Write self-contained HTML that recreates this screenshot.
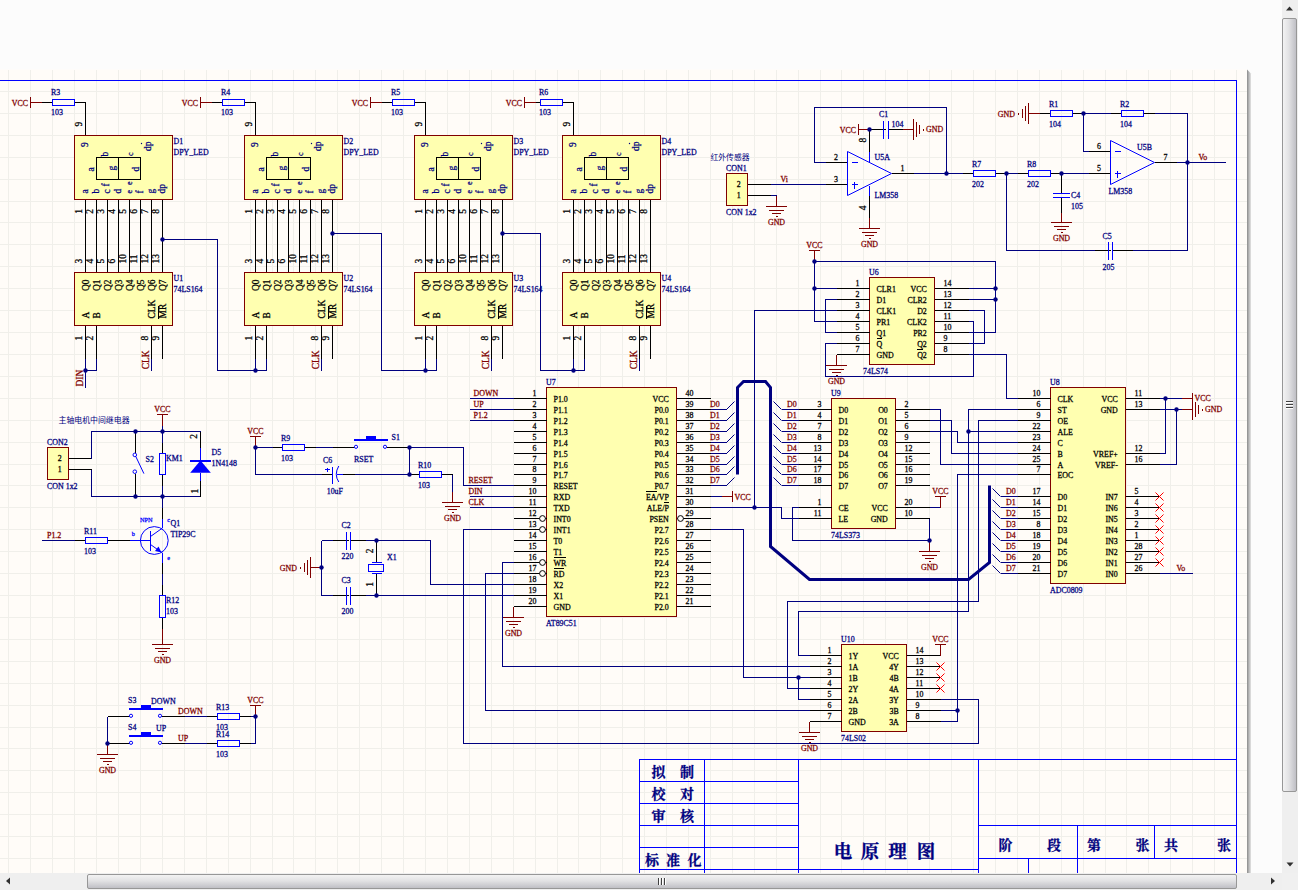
<!DOCTYPE html><html><head><meta charset="utf-8"><title>电原理图</title><style>html,body{margin:0;padding:0;background:#fcfcfc;overflow:hidden}svg{display:block}text{white-space:pre;stroke-width:0.28px}</style></head><body>
<svg width="1298" height="890" viewBox="0 0 1298 890" font-family='"Liberation Serif", serif' font-size="8.8">
<defs><linearGradient id="vth" x1="0" y1="0" x2="1" y2="0"><stop offset="0" stop-color="#f4f4f4"/><stop offset="0.45" stop-color="#e2e2e4"/><stop offset="1" stop-color="#bdbdc3"/></linearGradient><linearGradient id="hth" x1="0" y1="0" x2="0" y2="1"><stop offset="0" stop-color="#f4f4f4"/><stop offset="0.45" stop-color="#e2e2e4"/><stop offset="1" stop-color="#bdbdc3"/></linearGradient><linearGradient id="sh" x1="0" y1="0" x2="1" y2="0"><stop offset="0" stop-color="#8c8c8c"/><stop offset="1" stop-color="#e4e4e4"/></linearGradient></defs>
<rect width="1298" height="890" fill="#fcfcfc"/>
<rect x="0" y="69.5" width="1247" height="803.5" fill="#fffcf8"/>
<path d="M1247 69.5l4 4V873h-4z" fill="url(#sh)"/>
<path d="M8.5 70V873M30.5 70V873M52.5 70V873M74.5 70V873M96.5 70V873M118.5 70V873M140.5 70V873M162.5 70V873M184.5 70V873M206.5 70V873M228.5 70V873M250.5 70V873M272.5 70V873M293.5 70V873M315.5 70V873M337.5 70V873M359.5 70V873M381.5 70V873M403.5 70V873M425.5 70V873M447.5 70V873M469.5 70V873M491.5 70V873M513.5 70V873M535.5 70V873M557.5 70V873M578.5 70V873M600.5 70V873M622.5 70V873M644.5 70V873M666.5 70V873M688.5 70V873M710.5 70V873M732.5 70V873M754.5 70V873M776.5 70V873M798.5 70V873M820.5 70V873M841.5 70V873M863.5 70V873M885.5 70V873M907.5 70V873M929.5 70V873M951.5 70V873M973.5 70V873M995.5 70V873M1017.5 70V873M1039.5 70V873M1061.5 70V873M1083.5 70V873M1105.5 70V873M1126.5 70V873M1148.5 70V873M1170.5 70V873M1192.5 70V873M1214.5 70V873M1236.5 70V873M0 91.5H1247M0 113.5H1247M0 135.5H1247M0 157.5H1247M0 179.5H1247M0 201.5H1247M0 222.5H1247M0 244.5H1247M0 266.5H1247M0 288.5H1247M0 310.5H1247M0 332.5H1247M0 354.5H1247M0 376.5H1247M0 398.5H1247M0 420.5H1247M0 442.5H1247M0 464.5H1247M0 485.5H1247M0 507.5H1247M0 529.5H1247M0 551.5H1247M0 573.5H1247M0 595.5H1247M0 617.5H1247M0 639.5H1247M0 661.5H1247M0 683.5H1247M0 705.5H1247M0 727.5H1247M0 748.5H1247M0 770.5H1247M0 792.5H1247M0 814.5H1247M0 836.5H1247M0 858.5H1247" stroke="#f0efea" stroke-width="1" fill="none" shape-rendering="crispEdges"/>
<g shape-rendering="crispEdges">
<polyline points="30.5,96.5 30.5,107.5" stroke="#800000" stroke-width="1" fill="none"/>
<polyline points="30.5,102.5 41.5,102.5" stroke="#800000" stroke-width="1" fill="none"/>
<polyline points="41.5,102.5 52.5,102.5" stroke="#000000" stroke-width="1" fill="none"/>
<rect x="52.5" y="99.5" width="22" height="6" fill="none" stroke="#0000ff" stroke-width="1"/>
<polyline points="74.5,102.5 85.5,102.5 85.5,135.5" stroke="#000000" stroke-width="1" fill="none"/>
<rect x="74.5" y="135.5" width="98" height="64" fill="#ffffb0" stroke="#800000" stroke-width="1"/>
<rect x="96.5" y="157.5" width="44" height="22" fill="none" stroke="#000000" stroke-width="1"/>
<polyline points="118.5,157.5 118.5,179.5" stroke="#000000" stroke-width="1" fill="none"/>
<polyline points="85.5,199.5 85.5,272.5" stroke="#000000" stroke-width="1" fill="none"/>
<polyline points="96.5,199.5 96.5,272.5" stroke="#000000" stroke-width="1" fill="none"/>
<polyline points="107.5,199.5 107.5,272.5" stroke="#000000" stroke-width="1" fill="none"/>
<polyline points="118.5,199.5 118.5,272.5" stroke="#000000" stroke-width="1" fill="none"/>
<polyline points="129.5,199.5 129.5,272.5" stroke="#000000" stroke-width="1" fill="none"/>
<polyline points="140.5,199.5 140.5,272.5" stroke="#000000" stroke-width="1" fill="none"/>
<polyline points="151.5,199.5 151.5,272.5" stroke="#000000" stroke-width="1" fill="none"/>
<polyline points="162.5,199.5 162.5,272.5" stroke="#000000" stroke-width="1" fill="none"/>
<rect x="74.5" y="272.5" width="98" height="53" fill="#ffffb0" stroke="#800000" stroke-width="1"/>
<polyline points="85.5,325.5 85.5,358.5" stroke="#000000" stroke-width="1" fill="none"/>
<polyline points="96.5,325.5 96.5,358.5" stroke="#000000" stroke-width="1" fill="none"/>
<polyline points="151.5,325.5 151.5,358.5" stroke="#000000" stroke-width="1" fill="none"/>
<polyline points="162.5,325.5 162.5,358.5" stroke="#000000" stroke-width="1" fill="none"/>
<polyline points="158,318.5 158,306.24" stroke="#000000" stroke-width="1" fill="none"/>
<polyline points="85.5,358.5 85.5,370.5" stroke="#000080" stroke-width="1" fill="none"/>
<polyline points="96.5,358.5 96.5,370.5" stroke="#000080" stroke-width="1" fill="none"/>
<polyline points="151.5,358.5 151.5,370.5" stroke="#000080" stroke-width="1" fill="none"/>
<polyline points="85.5,370.5 96.5,370.5" stroke="#000080" stroke-width="1" fill="none"/>
<polyline points="85.5,370.5 85.5,387.5" stroke="#000080" stroke-width="1" fill="none"/>
<polyline points="162.5,239.5 217.5,239.5 217.5,370.5" stroke="#000080" stroke-width="1" fill="none"/>
<polyline points="200.5,96.5 200.5,107.5" stroke="#800000" stroke-width="1" fill="none"/>
<polyline points="200.5,102.5 211.5,102.5" stroke="#800000" stroke-width="1" fill="none"/>
<polyline points="211.5,102.5 222.5,102.5" stroke="#000000" stroke-width="1" fill="none"/>
<rect x="222.5" y="99.5" width="22" height="6" fill="none" stroke="#0000ff" stroke-width="1"/>
<polyline points="244.5,102.5 255.5,102.5 255.5,135.5" stroke="#000000" stroke-width="1" fill="none"/>
<rect x="244.5" y="135.5" width="98" height="64" fill="#ffffb0" stroke="#800000" stroke-width="1"/>
<rect x="266.5" y="157.5" width="44" height="22" fill="none" stroke="#000000" stroke-width="1"/>
<polyline points="288.5,157.5 288.5,179.5" stroke="#000000" stroke-width="1" fill="none"/>
<polyline points="255.5,199.5 255.5,272.5" stroke="#000000" stroke-width="1" fill="none"/>
<polyline points="266.5,199.5 266.5,272.5" stroke="#000000" stroke-width="1" fill="none"/>
<polyline points="277.5,199.5 277.5,272.5" stroke="#000000" stroke-width="1" fill="none"/>
<polyline points="288.5,199.5 288.5,272.5" stroke="#000000" stroke-width="1" fill="none"/>
<polyline points="299.5,199.5 299.5,272.5" stroke="#000000" stroke-width="1" fill="none"/>
<polyline points="310.5,199.5 310.5,272.5" stroke="#000000" stroke-width="1" fill="none"/>
<polyline points="321.5,199.5 321.5,272.5" stroke="#000000" stroke-width="1" fill="none"/>
<polyline points="332.5,199.5 332.5,272.5" stroke="#000000" stroke-width="1" fill="none"/>
<rect x="244.5" y="272.5" width="98" height="53" fill="#ffffb0" stroke="#800000" stroke-width="1"/>
<polyline points="255.5,325.5 255.5,358.5" stroke="#000000" stroke-width="1" fill="none"/>
<polyline points="266.5,325.5 266.5,358.5" stroke="#000000" stroke-width="1" fill="none"/>
<polyline points="321.5,325.5 321.5,358.5" stroke="#000000" stroke-width="1" fill="none"/>
<polyline points="332.5,325.5 332.5,358.5" stroke="#000000" stroke-width="1" fill="none"/>
<polyline points="328,318.5 328,306.24" stroke="#000000" stroke-width="1" fill="none"/>
<polyline points="255.5,358.5 255.5,370.5" stroke="#000080" stroke-width="1" fill="none"/>
<polyline points="266.5,358.5 266.5,370.5" stroke="#000080" stroke-width="1" fill="none"/>
<polyline points="321.5,358.5 321.5,370.5" stroke="#000080" stroke-width="1" fill="none"/>
<polyline points="332.5,233.5 381.5,233.5 381.5,370.5" stroke="#000080" stroke-width="1" fill="none"/>
<polyline points="370.5,96.5 370.5,107.5" stroke="#800000" stroke-width="1" fill="none"/>
<polyline points="370.5,102.5 381.5,102.5" stroke="#800000" stroke-width="1" fill="none"/>
<polyline points="381.5,102.5 392.5,102.5" stroke="#000000" stroke-width="1" fill="none"/>
<rect x="392.5" y="99.5" width="22" height="6" fill="none" stroke="#0000ff" stroke-width="1"/>
<polyline points="414.5,102.5 425.5,102.5 425.5,135.5" stroke="#000000" stroke-width="1" fill="none"/>
<rect x="414.5" y="135.5" width="98" height="64" fill="#ffffb0" stroke="#800000" stroke-width="1"/>
<rect x="436.5" y="157.5" width="44" height="22" fill="none" stroke="#000000" stroke-width="1"/>
<polyline points="458.5,157.5 458.5,179.5" stroke="#000000" stroke-width="1" fill="none"/>
<polyline points="425.5,199.5 425.5,272.5" stroke="#000000" stroke-width="1" fill="none"/>
<polyline points="436.5,199.5 436.5,272.5" stroke="#000000" stroke-width="1" fill="none"/>
<polyline points="447.5,199.5 447.5,272.5" stroke="#000000" stroke-width="1" fill="none"/>
<polyline points="458.5,199.5 458.5,272.5" stroke="#000000" stroke-width="1" fill="none"/>
<polyline points="469.5,199.5 469.5,272.5" stroke="#000000" stroke-width="1" fill="none"/>
<polyline points="480.5,199.5 480.5,272.5" stroke="#000000" stroke-width="1" fill="none"/>
<polyline points="491.5,199.5 491.5,272.5" stroke="#000000" stroke-width="1" fill="none"/>
<polyline points="502.5,199.5 502.5,272.5" stroke="#000000" stroke-width="1" fill="none"/>
<rect x="414.5" y="272.5" width="98" height="53" fill="#ffffb0" stroke="#800000" stroke-width="1"/>
<polyline points="425.5,325.5 425.5,358.5" stroke="#000000" stroke-width="1" fill="none"/>
<polyline points="436.5,325.5 436.5,358.5" stroke="#000000" stroke-width="1" fill="none"/>
<polyline points="491.5,325.5 491.5,358.5" stroke="#000000" stroke-width="1" fill="none"/>
<polyline points="502.5,325.5 502.5,358.5" stroke="#000000" stroke-width="1" fill="none"/>
<polyline points="498,318.5 498,306.24" stroke="#000000" stroke-width="1" fill="none"/>
<polyline points="425.5,358.5 425.5,370.5" stroke="#000080" stroke-width="1" fill="none"/>
<polyline points="436.5,358.5 436.5,370.5" stroke="#000080" stroke-width="1" fill="none"/>
<polyline points="491.5,358.5 491.5,370.5" stroke="#000080" stroke-width="1" fill="none"/>
<polyline points="502.5,233.5 540.5,233.5 540.5,370.5" stroke="#000080" stroke-width="1" fill="none"/>
<polyline points="524.5,96.5 524.5,107.5" stroke="#800000" stroke-width="1" fill="none"/>
<polyline points="524.5,102.5 535.5,102.5" stroke="#800000" stroke-width="1" fill="none"/>
<polyline points="535.5,102.5 540.5,102.5" stroke="#000000" stroke-width="1" fill="none"/>
<rect x="540.5" y="99.5" width="22" height="6" fill="none" stroke="#0000ff" stroke-width="1"/>
<polyline points="562.5,102.5 573.5,102.5 573.5,135.5" stroke="#000000" stroke-width="1" fill="none"/>
<rect x="562.5" y="135.5" width="98" height="64" fill="#ffffb0" stroke="#800000" stroke-width="1"/>
<rect x="584.5" y="157.5" width="44" height="22" fill="none" stroke="#000000" stroke-width="1"/>
<polyline points="606.5,157.5 606.5,179.5" stroke="#000000" stroke-width="1" fill="none"/>
<polyline points="573.5,199.5 573.5,272.5" stroke="#000000" stroke-width="1" fill="none"/>
<polyline points="584.5,199.5 584.5,272.5" stroke="#000000" stroke-width="1" fill="none"/>
<polyline points="595.5,199.5 595.5,272.5" stroke="#000000" stroke-width="1" fill="none"/>
<polyline points="606.5,199.5 606.5,272.5" stroke="#000000" stroke-width="1" fill="none"/>
<polyline points="617.5,199.5 617.5,272.5" stroke="#000000" stroke-width="1" fill="none"/>
<polyline points="628.5,199.5 628.5,272.5" stroke="#000000" stroke-width="1" fill="none"/>
<polyline points="639.5,199.5 639.5,272.5" stroke="#000000" stroke-width="1" fill="none"/>
<polyline points="650.5,199.5 650.5,272.5" stroke="#000000" stroke-width="1" fill="none"/>
<rect x="562.5" y="272.5" width="98" height="53" fill="#ffffb0" stroke="#800000" stroke-width="1"/>
<polyline points="573.5,325.5 573.5,358.5" stroke="#000000" stroke-width="1" fill="none"/>
<polyline points="584.5,325.5 584.5,358.5" stroke="#000000" stroke-width="1" fill="none"/>
<polyline points="639.5,325.5 639.5,358.5" stroke="#000000" stroke-width="1" fill="none"/>
<polyline points="650.5,325.5 650.5,358.5" stroke="#000000" stroke-width="1" fill="none"/>
<polyline points="646,318.5 646,306.24" stroke="#000000" stroke-width="1" fill="none"/>
<polyline points="573.5,358.5 573.5,370.5" stroke="#000080" stroke-width="1" fill="none"/>
<polyline points="584.5,358.5 584.5,370.5" stroke="#000080" stroke-width="1" fill="none"/>
<polyline points="639.5,358.5 639.5,370.5" stroke="#000080" stroke-width="1" fill="none"/>
<polyline points="217.5,370.5 266.5,370.5" stroke="#000080" stroke-width="1" fill="none"/>
<polyline points="381.5,370.5 436.5,370.5" stroke="#000080" stroke-width="1" fill="none"/>
<polyline points="540.5,370.5 584.5,370.5" stroke="#000080" stroke-width="1" fill="none"/>
<rect x="726.5" y="173.5" width="21" height="32" fill="#ffffb0" stroke="#800000" stroke-width="1"/>
<polyline points="747.5,184.5 770.5,184.5" stroke="#000000" stroke-width="1" fill="none"/>
<polyline points="747.5,195.5 770.5,195.5" stroke="#000000" stroke-width="1" fill="none"/>
<polyline points="770.5,184.5 825.5,184.5" stroke="#000080" stroke-width="1" fill="none"/>
<polyline points="770.5,195.5 776.5,195.5 776.5,195.5" stroke="#000080" stroke-width="1" fill="none"/>
<polyline points="776.5,195.5 776.5,206.5" stroke="#800000" stroke-width="1" fill="none"/>
<polyline points="776.5,195.5 776.5,206.5" stroke="#800000" stroke-width="1" fill="none"/>
<polyline points="766,206.5 787,206.5" stroke="#800000" stroke-width="1" fill="none"/>
<polyline points="769,210.5 784,210.5" stroke="#800000" stroke-width="1" fill="none"/>
<polyline points="772,213.5 781,213.5" stroke="#800000" stroke-width="1" fill="none"/>
<polyline points="775.5,216.5 777.5,216.5" stroke="#800000" stroke-width="1" fill="none"/>
<polyline points="825.5,162.5 847.5,162.5" stroke="#000000" stroke-width="1" fill="none"/>
<polyline points="825.5,184.5 847.5,184.5" stroke="#000000" stroke-width="1" fill="none"/>
<polyline points="891.5,173.5 913.5,173.5" stroke="#000000" stroke-width="1" fill="none"/>
<polyline points="851.5,162.5 857.5,162.5" stroke="#0000ff" stroke-width="1" fill="none"/>
<polyline points="851.5,184.5 857.5,184.5" stroke="#0000ff" stroke-width="1" fill="none"/>
<polyline points="854.5,181.5 854.5,188.5" stroke="#0000ff" stroke-width="1" fill="none"/>
<polyline points="869.5,129.5 869.5,151.5" stroke="#000000" stroke-width="1" fill="none"/>
<polyline points="869.5,151.5 869.5,161.5" stroke="#0000ff" stroke-width="1" fill="none"/>
<polyline points="869.5,185.5 869.5,195.5" stroke="#0000ff" stroke-width="1" fill="none"/>
<polyline points="869.5,195.5 869.5,217.5" stroke="#000000" stroke-width="1" fill="none"/>
<polyline points="869.5,217.5 869.5,228.5" stroke="#800000" stroke-width="1" fill="none"/>
<polyline points="859,228.5 880,228.5" stroke="#800000" stroke-width="1" fill="none"/>
<polyline points="862,232.5 877,232.5" stroke="#800000" stroke-width="1" fill="none"/>
<polyline points="865,235.5 874,235.5" stroke="#800000" stroke-width="1" fill="none"/>
<polyline points="868.5,238.5 870.5,238.5" stroke="#800000" stroke-width="1" fill="none"/>
<polyline points="825.5,162.5 814.5,162.5 814.5,107.5 946.5,107.5 946.5,173.5" stroke="#000080" stroke-width="1" fill="none"/>
<polyline points="913.5,173.5 962.5,173.5" stroke="#000080" stroke-width="1" fill="none"/>
<polyline points="858.5,123.5 858.5,134.5" stroke="#800000" stroke-width="1" fill="none"/>
<polyline points="858.5,129.5 869.5,129.5" stroke="#800000" stroke-width="1" fill="none"/>
<polyline points="869.5,129.5 885.5,129.5" stroke="#000000" stroke-width="1" fill="none"/>
<polyline points="883.5,120.5 883.5,138.5" stroke="#0000ff" stroke-width="1" fill="none"/>
<polyline points="888.5,120.5 888.5,138.5" stroke="#0000ff" stroke-width="1" fill="none"/>
<polyline points="888.5,129.5 902.5,129.5" stroke="#000000" stroke-width="1" fill="none"/>
<polyline points="902.5,129.5 913.5,129.5" stroke="#800000" stroke-width="1" fill="none"/>
<polyline points="913.5,119 913.5,140" stroke="#800000" stroke-width="1" fill="none"/>
<polyline points="916.5,122 916.5,137" stroke="#800000" stroke-width="1" fill="none"/>
<polyline points="919.5,125 919.5,134" stroke="#800000" stroke-width="1" fill="none"/>
<polyline points="923.5,128.5 923.5,130.5" stroke="#800000" stroke-width="1" fill="none"/>
<polyline points="962.5,173.5 973.5,173.5" stroke="#000000" stroke-width="1" fill="none"/>
<polyline points="995.5,173.5 1006.5,173.5" stroke="#000000" stroke-width="1" fill="none"/>
<rect x="973.5" y="170.5" width="22" height="6" fill="none" stroke="#0000ff" stroke-width="1"/>
<polyline points="1017.5,173.5 1028.5,173.5" stroke="#000000" stroke-width="1" fill="none"/>
<polyline points="1050.5,173.5 1061.5,173.5" stroke="#000000" stroke-width="1" fill="none"/>
<rect x="1028.5" y="170.5" width="22" height="6" fill="none" stroke="#0000ff" stroke-width="1"/>
<polyline points="1006.5,173.5 1017.5,173.5" stroke="#000080" stroke-width="1" fill="none"/>
<polyline points="1061.5,173.5 1088.5,173.5" stroke="#000080" stroke-width="1" fill="none"/>
<polyline points="1088.5,151.5 1110.5,151.5" stroke="#000000" stroke-width="1" fill="none"/>
<polyline points="1088.5,173.5 1110.5,173.5" stroke="#000000" stroke-width="1" fill="none"/>
<polyline points="1154.5,162.5 1176.5,162.5" stroke="#000000" stroke-width="1" fill="none"/>
<polyline points="1114.5,151.5 1120.5,151.5" stroke="#0000ff" stroke-width="1" fill="none"/>
<polyline points="1114.5,173.5 1120.5,173.5" stroke="#0000ff" stroke-width="1" fill="none"/>
<polyline points="1117.5,170.5 1117.5,177.5" stroke="#0000ff" stroke-width="1" fill="none"/>
<polyline points="1039.5,113.5 1028.5,113.5" stroke="#800000" stroke-width="1" fill="none"/>
<polyline points="1028.5,103 1028.5,124" stroke="#800000" stroke-width="1" fill="none"/>
<polyline points="1025.5,106 1025.5,121" stroke="#800000" stroke-width="1" fill="none"/>
<polyline points="1022.5,109 1022.5,118" stroke="#800000" stroke-width="1" fill="none"/>
<polyline points="1018.5,112.5 1018.5,114.5" stroke="#800000" stroke-width="1" fill="none"/>
<polyline points="1039.5,113.5 1050.5,113.5" stroke="#000000" stroke-width="1" fill="none"/>
<polyline points="1072.5,113.5 1083.5,113.5" stroke="#000000" stroke-width="1" fill="none"/>
<rect x="1050.5" y="110.5" width="22" height="6" fill="none" stroke="#0000ff" stroke-width="1"/>
<polyline points="1110.5,113.5 1121.5,113.5" stroke="#000000" stroke-width="1" fill="none"/>
<polyline points="1143.5,113.5 1154.5,113.5" stroke="#000000" stroke-width="1" fill="none"/>
<rect x="1121.5" y="110.5" width="22" height="6" fill="none" stroke="#0000ff" stroke-width="1"/>
<polyline points="1083.5,113.5 1110.5,113.5" stroke="#000080" stroke-width="1" fill="none"/>
<polyline points="1154.5,113.5 1187.5,113.5 1187.5,250.5 1132.5,250.5" stroke="#000080" stroke-width="1" fill="none"/>
<polyline points="1083.5,113.5 1083.5,151.5 1088.5,151.5" stroke="#000080" stroke-width="1" fill="none"/>
<polyline points="1176.5,162.5 1225.5,162.5" stroke="#000080" stroke-width="1" fill="none"/>
<polyline points="1061.5,173.5 1061.5,193.5" stroke="#000000" stroke-width="1" fill="none"/>
<polyline points="1053,193.5 1070,193.5" stroke="#0000ff" stroke-width="1" fill="none"/>
<polyline points="1053,197.5 1070,197.5" stroke="#0000ff" stroke-width="1" fill="none"/>
<polyline points="1061.5,197.5 1061.5,212.5" stroke="#000000" stroke-width="1" fill="none"/>
<polyline points="1061.5,212.5 1061.5,222.5" stroke="#800000" stroke-width="1" fill="none"/>
<polyline points="1051,222.5 1072,222.5" stroke="#800000" stroke-width="1" fill="none"/>
<polyline points="1054,226.5 1069,226.5" stroke="#800000" stroke-width="1" fill="none"/>
<polyline points="1057,229.5 1066,229.5" stroke="#800000" stroke-width="1" fill="none"/>
<polyline points="1060.5,232.5 1062.5,232.5" stroke="#800000" stroke-width="1" fill="none"/>
<polyline points="1006.5,173.5 1006.5,250.5 1094.5,250.5" stroke="#000080" stroke-width="1" fill="none"/>
<polyline points="1094.5,250.5 1110.5,250.5" stroke="#000000" stroke-width="1" fill="none"/>
<polyline points="1108.5,241.5 1108.5,259.5" stroke="#0000ff" stroke-width="1" fill="none"/>
<polyline points="1112.5,241.5 1112.5,259.5" stroke="#0000ff" stroke-width="1" fill="none"/>
<polyline points="1112.5,250.5 1132.5,250.5" stroke="#000000" stroke-width="1" fill="none"/>
<rect x="869.5" y="277.5" width="65" height="87" fill="#ffffb0" stroke="#800000" stroke-width="1"/>
<polyline points="836.5,288.5 869.5,288.5" stroke="#000000" stroke-width="1" fill="none"/>
<polyline points="836.5,299.5 869.5,299.5" stroke="#000000" stroke-width="1" fill="none"/>
<polyline points="836.5,310.5 869.5,310.5" stroke="#000000" stroke-width="1" fill="none"/>
<polyline points="836.5,321.5 869.5,321.5" stroke="#000000" stroke-width="1" fill="none"/>
<polyline points="836.5,332.5 869.5,332.5" stroke="#000000" stroke-width="1" fill="none"/>
<polyline points="836.5,343.5 869.5,343.5" stroke="#000000" stroke-width="1" fill="none"/>
<polyline points="876.5,338.5 882.19,338.5" stroke="#000000" stroke-width="1" fill="none"/>
<polyline points="836.5,354.5 869.5,354.5" stroke="#000000" stroke-width="1" fill="none"/>
<polyline points="934.5,288.5 968.5,288.5" stroke="#000000" stroke-width="1" fill="none"/>
<polyline points="934.5,299.5 968.5,299.5" stroke="#000000" stroke-width="1" fill="none"/>
<polyline points="934.5,310.5 968.5,310.5" stroke="#000000" stroke-width="1" fill="none"/>
<polyline points="934.5,321.5 968.5,321.5" stroke="#000000" stroke-width="1" fill="none"/>
<polyline points="934.5,332.5 968.5,332.5" stroke="#000000" stroke-width="1" fill="none"/>
<polyline points="934.5,343.5 968.5,343.5" stroke="#000000" stroke-width="1" fill="none"/>
<polyline points="934.5,354.5 968.5,354.5" stroke="#000000" stroke-width="1" fill="none"/>
<polyline points="917.18,349.5 922.86,349.5" stroke="#000000" stroke-width="1" fill="none"/>
<polyline points="814.5,261.5 814.5,250.5" stroke="#800000" stroke-width="1" fill="none"/>
<polyline points="809,250.5 820,250.5" stroke="#800000" stroke-width="1" fill="none"/>
<polyline points="814.5,261.5 995.5,261.5 995.5,332.5 968.5,332.5" stroke="#000080" stroke-width="1" fill="none"/>
<polyline points="968.5,288.5 995.5,288.5" stroke="#000080" stroke-width="1" fill="none"/>
<polyline points="968.5,299.5 995.5,299.5" stroke="#000080" stroke-width="1" fill="none"/>
<polyline points="968.5,310.5 984.5,310.5 984.5,343.5 968.5,343.5" stroke="#000080" stroke-width="1" fill="none"/>
<polyline points="968.5,321.5 973.5,321.5 973.5,376.5 825.5,376.5 825.5,343.5 836.5,343.5" stroke="#000080" stroke-width="1" fill="none"/>
<polyline points="968.5,354.5 1006.5,354.5 1006.5,398.5 1017.5,398.5" stroke="#000080" stroke-width="1" fill="none"/>
<polyline points="814.5,261.5 814.5,321.5 836.5,321.5" stroke="#000080" stroke-width="1" fill="none"/>
<polyline points="814.5,288.5 836.5,288.5" stroke="#000080" stroke-width="1" fill="none"/>
<polyline points="836.5,299.5 825.5,299.5 825.5,332.5 836.5,332.5" stroke="#000080" stroke-width="1" fill="none"/>
<polyline points="836.5,310.5 754.5,310.5 754.5,507.5" stroke="#000080" stroke-width="1" fill="none"/>
<polyline points="836.5,354.5 836.5,365.5" stroke="#800000" stroke-width="1" fill="none"/>
<polyline points="826,365.5 847,365.5" stroke="#800000" stroke-width="1" fill="none"/>
<polyline points="829,369.5 844,369.5" stroke="#800000" stroke-width="1" fill="none"/>
<polyline points="832,372.5 841,372.5" stroke="#800000" stroke-width="1" fill="none"/>
<polyline points="835.5,375.5 837.5,375.5" stroke="#800000" stroke-width="1" fill="none"/>
<rect x="546.5" y="387.5" width="130" height="229" fill="#ffffb0" stroke="#800000" stroke-width="1"/>
<polyline points="513.5,398.5 546.5,398.5" stroke="#000000" stroke-width="1" fill="none"/>
<polyline points="513.5,409.5 546.5,409.5" stroke="#000000" stroke-width="1" fill="none"/>
<polyline points="513.5,420.5 546.5,420.5" stroke="#000000" stroke-width="1" fill="none"/>
<polyline points="513.5,431.5 546.5,431.5" stroke="#000000" stroke-width="1" fill="none"/>
<polyline points="513.5,442.5 546.5,442.5" stroke="#000000" stroke-width="1" fill="none"/>
<polyline points="513.5,453.5 546.5,453.5" stroke="#000000" stroke-width="1" fill="none"/>
<polyline points="513.5,464.5 546.5,464.5" stroke="#000000" stroke-width="1" fill="none"/>
<polyline points="513.5,474.5 546.5,474.5" stroke="#000000" stroke-width="1" fill="none"/>
<polyline points="513.5,485.5 546.5,485.5" stroke="#000000" stroke-width="1" fill="none"/>
<polyline points="513.5,496.5 546.5,496.5" stroke="#000000" stroke-width="1" fill="none"/>
<polyline points="513.5,507.5 546.5,507.5" stroke="#000000" stroke-width="1" fill="none"/>
<polyline points="513.5,518.5 546.5,518.5" stroke="#000000" stroke-width="1" fill="none"/>
<polyline points="513.5,529.5 546.5,529.5" stroke="#000000" stroke-width="1" fill="none"/>
<polyline points="513.5,540.5 546.5,540.5" stroke="#000000" stroke-width="1" fill="none"/>
<polyline points="513.5,551.5 546.5,551.5" stroke="#000000" stroke-width="1" fill="none"/>
<polyline points="513.5,562.5 546.5,562.5" stroke="#000000" stroke-width="1" fill="none"/>
<polyline points="553.5,557.5 566.19,557.5" stroke="#000000" stroke-width="1" fill="none"/>
<polyline points="513.5,573.5 546.5,573.5" stroke="#000000" stroke-width="1" fill="none"/>
<polyline points="553.5,568.5 564.44,568.5" stroke="#000000" stroke-width="1" fill="none"/>
<polyline points="513.5,584.5 546.5,584.5" stroke="#000000" stroke-width="1" fill="none"/>
<polyline points="513.5,595.5 546.5,595.5" stroke="#000000" stroke-width="1" fill="none"/>
<polyline points="513.5,606.5 546.5,606.5" stroke="#000000" stroke-width="1" fill="none"/>
<polyline points="676.5,398.5 710.5,398.5" stroke="#000000" stroke-width="1" fill="none"/>
<polyline points="676.5,409.5 710.5,409.5" stroke="#000000" stroke-width="1" fill="none"/>
<polyline points="676.5,420.5 710.5,420.5" stroke="#000000" stroke-width="1" fill="none"/>
<polyline points="676.5,431.5 710.5,431.5" stroke="#000000" stroke-width="1" fill="none"/>
<polyline points="676.5,442.5 710.5,442.5" stroke="#000000" stroke-width="1" fill="none"/>
<polyline points="676.5,453.5 710.5,453.5" stroke="#000000" stroke-width="1" fill="none"/>
<polyline points="676.5,464.5 710.5,464.5" stroke="#000000" stroke-width="1" fill="none"/>
<polyline points="676.5,474.5 710.5,474.5" stroke="#000000" stroke-width="1" fill="none"/>
<polyline points="676.5,485.5 710.5,485.5" stroke="#000000" stroke-width="1" fill="none"/>
<polyline points="676.5,496.5 710.5,496.5" stroke="#000000" stroke-width="1" fill="none"/>
<polyline points="646.05,491.5 656.54,491.5" stroke="#000000" stroke-width="1" fill="none"/>
<polyline points="676.5,507.5 710.5,507.5" stroke="#000000" stroke-width="1" fill="none"/>
<polyline points="664.42,502.5 668.8,502.5" stroke="#000000" stroke-width="1" fill="none"/>
<polyline points="676.5,518.5 710.5,518.5" stroke="#000000" stroke-width="1" fill="none"/>
<polyline points="676.5,529.5 710.5,529.5" stroke="#000000" stroke-width="1" fill="none"/>
<polyline points="676.5,540.5 710.5,540.5" stroke="#000000" stroke-width="1" fill="none"/>
<polyline points="676.5,551.5 710.5,551.5" stroke="#000000" stroke-width="1" fill="none"/>
<polyline points="676.5,562.5 710.5,562.5" stroke="#000000" stroke-width="1" fill="none"/>
<polyline points="676.5,573.5 710.5,573.5" stroke="#000000" stroke-width="1" fill="none"/>
<polyline points="676.5,584.5 710.5,584.5" stroke="#000000" stroke-width="1" fill="none"/>
<polyline points="676.5,595.5 710.5,595.5" stroke="#000000" stroke-width="1" fill="none"/>
<polyline points="676.5,606.5 710.5,606.5" stroke="#000000" stroke-width="1" fill="none"/>
<polyline points="469.5,398.5 513.5,398.5" stroke="#000080" stroke-width="1" fill="none"/>
<polyline points="469.5,409.5 513.5,409.5" stroke="#000080" stroke-width="1" fill="none"/>
<polyline points="469.5,420.5 513.5,420.5" stroke="#000080" stroke-width="1" fill="none"/>
<polyline points="409.5,447.5 463.5,447.5 463.5,485.5 513.5,485.5" stroke="#000080" stroke-width="1" fill="none"/>
<polyline points="469.5,496.5 513.5,496.5" stroke="#000080" stroke-width="1" fill="none"/>
<polyline points="469.5,507.5 513.5,507.5" stroke="#000080" stroke-width="1" fill="none"/>
<polyline points="513.5,529.5 463.5,529.5 463.5,743.5 978.5,743.5 978.5,699.5 940.5,699.5" stroke="#000080" stroke-width="1" fill="none"/>
<polyline points="513.5,562.5 502.5,562.5 502.5,666.5 809.5,666.5" stroke="#000080" stroke-width="1" fill="none"/>
<polyline points="513.5,573.5 485.5,573.5 485.5,710.5 809.5,710.5" stroke="#000080" stroke-width="1" fill="none"/>
<polyline points="513.5,584.5 430.5,584.5 430.5,540.5 376.5,540.5" stroke="#000080" stroke-width="1" fill="none"/>
<polyline points="513.5,595.5 376.5,595.5" stroke="#000080" stroke-width="1" fill="none"/>
<polyline points="513.5,606.5 513.5,617.5" stroke="#800000" stroke-width="1" fill="none"/>
<polyline points="503,617.5 524,617.5" stroke="#800000" stroke-width="1" fill="none"/>
<polyline points="506,621.5 521,621.5" stroke="#800000" stroke-width="1" fill="none"/>
<polyline points="509,624.5 518,624.5" stroke="#800000" stroke-width="1" fill="none"/>
<polyline points="512.5,627.5 514.5,627.5" stroke="#800000" stroke-width="1" fill="none"/>
<polyline points="710.5,409.5 726.5,409.5" stroke="#000080" stroke-width="1" fill="none"/>
<polyline points="710.5,420.5 726.5,420.5" stroke="#000080" stroke-width="1" fill="none"/>
<polyline points="710.5,431.5 726.5,431.5" stroke="#000080" stroke-width="1" fill="none"/>
<polyline points="710.5,442.5 726.5,442.5" stroke="#000080" stroke-width="1" fill="none"/>
<polyline points="710.5,453.5 726.5,453.5" stroke="#000080" stroke-width="1" fill="none"/>
<polyline points="710.5,464.5 726.5,464.5" stroke="#000080" stroke-width="1" fill="none"/>
<polyline points="710.5,474.5 726.5,474.5" stroke="#000080" stroke-width="1" fill="none"/>
<polyline points="710.5,485.5 726.5,485.5" stroke="#000080" stroke-width="1" fill="none"/>
<polyline points="710.5,496.5 721.5,496.5" stroke="#000080" stroke-width="1" fill="none"/>
<polyline points="721.5,496.5 732.5,496.5" stroke="#800000" stroke-width="1" fill="none"/>
<polyline points="732.5,491 732.5,502" stroke="#800000" stroke-width="1" fill="none"/>
<polyline points="710.5,507.5 781.5,507.5 781.5,518.5 798.5,518.5" stroke="#000080" stroke-width="1" fill="none"/>
<polyline points="710.5,529.5 743.5,529.5 743.5,677.5 809.5,677.5" stroke="#000080" stroke-width="1" fill="none"/>
<rect x="831.5" y="398.5" width="64" height="130" fill="#ffffb0" stroke="#800000" stroke-width="1"/>
<polyline points="798.5,409.5 831.5,409.5" stroke="#000000" stroke-width="1" fill="none"/>
<polyline points="798.5,420.5 831.5,420.5" stroke="#000000" stroke-width="1" fill="none"/>
<polyline points="798.5,431.5 831.5,431.5" stroke="#000000" stroke-width="1" fill="none"/>
<polyline points="798.5,442.5 831.5,442.5" stroke="#000000" stroke-width="1" fill="none"/>
<polyline points="798.5,453.5 831.5,453.5" stroke="#000000" stroke-width="1" fill="none"/>
<polyline points="798.5,464.5 831.5,464.5" stroke="#000000" stroke-width="1" fill="none"/>
<polyline points="798.5,474.5 831.5,474.5" stroke="#000000" stroke-width="1" fill="none"/>
<polyline points="798.5,485.5 831.5,485.5" stroke="#000000" stroke-width="1" fill="none"/>
<polyline points="798.5,507.5 831.5,507.5" stroke="#000000" stroke-width="1" fill="none"/>
<polyline points="798.5,518.5 831.5,518.5" stroke="#000000" stroke-width="1" fill="none"/>
<polyline points="895.5,409.5 929.5,409.5" stroke="#000000" stroke-width="1" fill="none"/>
<polyline points="895.5,420.5 929.5,420.5" stroke="#000000" stroke-width="1" fill="none"/>
<polyline points="895.5,431.5 929.5,431.5" stroke="#000000" stroke-width="1" fill="none"/>
<polyline points="895.5,442.5 929.5,442.5" stroke="#000000" stroke-width="1" fill="none"/>
<polyline points="895.5,453.5 929.5,453.5" stroke="#000000" stroke-width="1" fill="none"/>
<polyline points="895.5,464.5 929.5,464.5" stroke="#000000" stroke-width="1" fill="none"/>
<polyline points="895.5,474.5 929.5,474.5" stroke="#000000" stroke-width="1" fill="none"/>
<polyline points="895.5,485.5 929.5,485.5" stroke="#000000" stroke-width="1" fill="none"/>
<polyline points="895.5,507.5 929.5,507.5" stroke="#000000" stroke-width="1" fill="none"/>
<polyline points="895.5,518.5 929.5,518.5" stroke="#000000" stroke-width="1" fill="none"/>
<polyline points="781.5,409.5 798.5,409.5" stroke="#000080" stroke-width="1" fill="none"/>
<polyline points="781.5,420.5 798.5,420.5" stroke="#000080" stroke-width="1" fill="none"/>
<polyline points="781.5,431.5 798.5,431.5" stroke="#000080" stroke-width="1" fill="none"/>
<polyline points="781.5,442.5 798.5,442.5" stroke="#000080" stroke-width="1" fill="none"/>
<polyline points="781.5,453.5 798.5,453.5" stroke="#000080" stroke-width="1" fill="none"/>
<polyline points="781.5,464.5 798.5,464.5" stroke="#000080" stroke-width="1" fill="none"/>
<polyline points="781.5,474.5 798.5,474.5" stroke="#000080" stroke-width="1" fill="none"/>
<polyline points="781.5,485.5 798.5,485.5" stroke="#000080" stroke-width="1" fill="none"/>
<polyline points="929.5,409.5 940.5,409.5 940.5,464.5 1017.5,464.5" stroke="#000080" stroke-width="1" fill="none"/>
<polyline points="929.5,420.5 951.5,420.5 951.5,453.5 1017.5,453.5" stroke="#000080" stroke-width="1" fill="none"/>
<polyline points="929.5,431.5 957.5,431.5 957.5,442.5 1017.5,442.5" stroke="#000080" stroke-width="1" fill="none"/>
<polyline points="929.5,507.5 940.5,507.5" stroke="#000080" stroke-width="1" fill="none"/>
<polyline points="940.5,507.5 940.5,496.5" stroke="#800000" stroke-width="1" fill="none"/>
<polyline points="935,496.5 946,496.5" stroke="#800000" stroke-width="1" fill="none"/>
<polyline points="929.5,518.5 929.5,540.5 792.5,540.5 792.5,507.5 798.5,507.5" stroke="#000080" stroke-width="1" fill="none"/>
<polyline points="929.5,540.5 929.5,551.5" stroke="#800000" stroke-width="1" fill="none"/>
<polyline points="919,551.5 940,551.5" stroke="#800000" stroke-width="1" fill="none"/>
<polyline points="922,555.5 937,555.5" stroke="#800000" stroke-width="1" fill="none"/>
<polyline points="925,558.5 934,558.5" stroke="#800000" stroke-width="1" fill="none"/>
<polyline points="928.5,561.5 930.5,561.5" stroke="#800000" stroke-width="1" fill="none"/>
<rect x="1050.5" y="387.5" width="75" height="196" fill="#ffffb0" stroke="#800000" stroke-width="1"/>
<polyline points="1017.5,398.5 1050.5,398.5" stroke="#000000" stroke-width="1" fill="none"/>
<polyline points="1017.5,409.5 1050.5,409.5" stroke="#000000" stroke-width="1" fill="none"/>
<polyline points="1017.5,420.5 1050.5,420.5" stroke="#000000" stroke-width="1" fill="none"/>
<polyline points="1017.5,431.5 1050.5,431.5" stroke="#000000" stroke-width="1" fill="none"/>
<polyline points="1017.5,442.5 1050.5,442.5" stroke="#000000" stroke-width="1" fill="none"/>
<polyline points="1017.5,453.5 1050.5,453.5" stroke="#000000" stroke-width="1" fill="none"/>
<polyline points="1017.5,464.5 1050.5,464.5" stroke="#000000" stroke-width="1" fill="none"/>
<polyline points="1017.5,474.5 1050.5,474.5" stroke="#000000" stroke-width="1" fill="none"/>
<polyline points="1017.5,496.5 1050.5,496.5" stroke="#000000" stroke-width="1" fill="none"/>
<polyline points="1017.5,507.5 1050.5,507.5" stroke="#000000" stroke-width="1" fill="none"/>
<polyline points="1017.5,518.5 1050.5,518.5" stroke="#000000" stroke-width="1" fill="none"/>
<polyline points="1017.5,529.5 1050.5,529.5" stroke="#000000" stroke-width="1" fill="none"/>
<polyline points="1017.5,540.5 1050.5,540.5" stroke="#000000" stroke-width="1" fill="none"/>
<polyline points="1017.5,551.5 1050.5,551.5" stroke="#000000" stroke-width="1" fill="none"/>
<polyline points="1017.5,562.5 1050.5,562.5" stroke="#000000" stroke-width="1" fill="none"/>
<polyline points="1017.5,573.5 1050.5,573.5" stroke="#000000" stroke-width="1" fill="none"/>
<polyline points="1125.5,398.5 1159.5,398.5" stroke="#000000" stroke-width="1" fill="none"/>
<polyline points="1125.5,409.5 1159.5,409.5" stroke="#000000" stroke-width="1" fill="none"/>
<polyline points="1125.5,453.5 1159.5,453.5" stroke="#000000" stroke-width="1" fill="none"/>
<polyline points="1125.5,464.5 1159.5,464.5" stroke="#000000" stroke-width="1" fill="none"/>
<polyline points="1125.5,496.5 1159.5,496.5" stroke="#000000" stroke-width="1" fill="none"/>
<polyline points="1125.5,507.5 1159.5,507.5" stroke="#000000" stroke-width="1" fill="none"/>
<polyline points="1125.5,518.5 1159.5,518.5" stroke="#000000" stroke-width="1" fill="none"/>
<polyline points="1125.5,529.5 1159.5,529.5" stroke="#000000" stroke-width="1" fill="none"/>
<polyline points="1125.5,540.5 1159.5,540.5" stroke="#000000" stroke-width="1" fill="none"/>
<polyline points="1125.5,551.5 1159.5,551.5" stroke="#000000" stroke-width="1" fill="none"/>
<polyline points="1125.5,562.5 1159.5,562.5" stroke="#000000" stroke-width="1" fill="none"/>
<polyline points="1125.5,573.5 1159.5,573.5" stroke="#000000" stroke-width="1" fill="none"/>
<polyline points="1000.5,496.5 1017.5,496.5" stroke="#000080" stroke-width="1" fill="none"/>
<polyline points="1000.5,507.5 1017.5,507.5" stroke="#000080" stroke-width="1" fill="none"/>
<polyline points="1000.5,518.5 1017.5,518.5" stroke="#000080" stroke-width="1" fill="none"/>
<polyline points="1000.5,529.5 1017.5,529.5" stroke="#000080" stroke-width="1" fill="none"/>
<polyline points="1000.5,540.5 1017.5,540.5" stroke="#000080" stroke-width="1" fill="none"/>
<polyline points="1000.5,551.5 1017.5,551.5" stroke="#000080" stroke-width="1" fill="none"/>
<polyline points="1000.5,562.5 1017.5,562.5" stroke="#000080" stroke-width="1" fill="none"/>
<polyline points="1000.5,573.5 1017.5,573.5" stroke="#000080" stroke-width="1" fill="none"/>
<polyline points="1159.5,573.5 1192.5,573.5" stroke="#000080" stroke-width="1" fill="none"/>
<polyline points="1159.5,398.5 1181.5,398.5" stroke="#000080" stroke-width="1" fill="none"/>
<polyline points="1159.5,409.5 1181.5,409.5" stroke="#000080" stroke-width="1" fill="none"/>
<polyline points="1165.5,398.5 1165.5,453.5 1159.5,453.5" stroke="#000080" stroke-width="1" fill="none"/>
<polyline points="1176.5,409.5 1176.5,464.5 1159.5,464.5" stroke="#000080" stroke-width="1" fill="none"/>
<polyline points="1181.5,398.5 1192.5,398.5" stroke="#800000" stroke-width="1" fill="none"/>
<polyline points="1192.5,392.5 1192.5,404.5" stroke="#800000" stroke-width="1" fill="none"/>
<polyline points="1181.5,409.5 1192.5,409.5" stroke="#800000" stroke-width="1" fill="none"/>
<polyline points="1192.5,399 1192.5,420" stroke="#800000" stroke-width="1" fill="none"/>
<polyline points="1195.5,402 1195.5,417" stroke="#800000" stroke-width="1" fill="none"/>
<polyline points="1198.5,405 1198.5,414" stroke="#800000" stroke-width="1" fill="none"/>
<polyline points="1202.5,408.5 1202.5,410.5" stroke="#800000" stroke-width="1" fill="none"/>
<polyline points="1017.5,409.5 968.5,409.5 968.5,611.5 798.5,611.5 798.5,655.5 809.5,655.5" stroke="#000080" stroke-width="1" fill="none"/>
<polyline points="968.5,431.5 1017.5,431.5" stroke="#000080" stroke-width="1" fill="none"/>
<polyline points="1017.5,420.5 978.5,420.5 978.5,601.5 787.5,601.5 787.5,688.5 809.5,688.5" stroke="#000080" stroke-width="1" fill="none"/>
<polyline points="1017.5,474.5 957.5,474.5 957.5,721.5 940.5,721.5" stroke="#000080" stroke-width="1" fill="none"/>
<polyline points="940.5,710.5 957.5,710.5" stroke="#000080" stroke-width="1" fill="none"/>
<rect x="841.5" y="644.5" width="65" height="87" fill="#ffffb0" stroke="#800000" stroke-width="1"/>
<polyline points="809.5,655.5 841.5,655.5" stroke="#000000" stroke-width="1" fill="none"/>
<polyline points="809.5,666.5 841.5,666.5" stroke="#000000" stroke-width="1" fill="none"/>
<polyline points="809.5,677.5 841.5,677.5" stroke="#000000" stroke-width="1" fill="none"/>
<polyline points="809.5,688.5 841.5,688.5" stroke="#000000" stroke-width="1" fill="none"/>
<polyline points="809.5,699.5 841.5,699.5" stroke="#000000" stroke-width="1" fill="none"/>
<polyline points="809.5,710.5 841.5,710.5" stroke="#000000" stroke-width="1" fill="none"/>
<polyline points="809.5,721.5 841.5,721.5" stroke="#000000" stroke-width="1" fill="none"/>
<polyline points="906.5,655.5 940.5,655.5" stroke="#000000" stroke-width="1" fill="none"/>
<polyline points="906.5,666.5 940.5,666.5" stroke="#000000" stroke-width="1" fill="none"/>
<polyline points="906.5,677.5 940.5,677.5" stroke="#000000" stroke-width="1" fill="none"/>
<polyline points="906.5,688.5 940.5,688.5" stroke="#000000" stroke-width="1" fill="none"/>
<polyline points="906.5,699.5 940.5,699.5" stroke="#000000" stroke-width="1" fill="none"/>
<polyline points="906.5,710.5 940.5,710.5" stroke="#000000" stroke-width="1" fill="none"/>
<polyline points="906.5,721.5 940.5,721.5" stroke="#000000" stroke-width="1" fill="none"/>
<polyline points="798.5,677.5 798.5,699.5 809.5,699.5" stroke="#000080" stroke-width="1" fill="none"/>
<polyline points="940.5,655.5 940.5,644.5" stroke="#800000" stroke-width="1" fill="none"/>
<polyline points="935,644.5 946,644.5" stroke="#800000" stroke-width="1" fill="none"/>
<polyline points="809.5,721.5 809.5,732.5" stroke="#800000" stroke-width="1" fill="none"/>
<polyline points="799,732.5 820,732.5" stroke="#800000" stroke-width="1" fill="none"/>
<polyline points="802,736.5 817,736.5" stroke="#800000" stroke-width="1" fill="none"/>
<polyline points="805,739.5 814,739.5" stroke="#800000" stroke-width="1" fill="none"/>
<polyline points="808.5,742.5 810.5,742.5" stroke="#800000" stroke-width="1" fill="none"/>
<rect x="47.5" y="447.5" width="21" height="32" fill="#ffffb0" stroke="#800000" stroke-width="1"/>
<polyline points="68.5,458.5 91.5,458.5" stroke="#000000" stroke-width="1" fill="none"/>
<polyline points="68.5,469.5 91.5,469.5" stroke="#000000" stroke-width="1" fill="none"/>
<polyline points="91.5,458.5 91.5,431.5 200.5,431.5" stroke="#000080" stroke-width="1" fill="none"/>
<polyline points="91.5,469.5 91.5,496.5 200.5,496.5" stroke="#000080" stroke-width="1" fill="none"/>
<polyline points="162.5,425.5 162.5,414.5" stroke="#800000" stroke-width="1" fill="none"/>
<polyline points="157,414.5 168,414.5" stroke="#800000" stroke-width="1" fill="none"/>
<polyline points="162.5,425.5 162.5,431.5" stroke="#000080" stroke-width="1" fill="none"/>
<polyline points="135.5,431.5 135.5,453" stroke="#000000" stroke-width="1" fill="none"/>
<polyline points="135.5,474 135.5,496.5" stroke="#000000" stroke-width="1" fill="none"/>
<polyline points="162.5,431.5 162.5,442.5" stroke="#000080" stroke-width="1" fill="none"/>
<polyline points="162.5,442.5 162.5,453.5" stroke="#000000" stroke-width="1" fill="none"/>
<rect x="159.5" y="453.5" width="6" height="21" fill="none" stroke="#0000ff" stroke-width="1"/>
<polyline points="162.5,474.5 162.5,485.5" stroke="#000000" stroke-width="1" fill="none"/>
<polyline points="162.5,485.5 162.5,507.5" stroke="#000080" stroke-width="1" fill="none"/>
<polyline points="162.5,507.5 162.5,518.5" stroke="#000000" stroke-width="1" fill="none"/>
<polyline points="200.5,431.5 200.5,447.5" stroke="#000000" stroke-width="1" fill="none"/>
<polyline points="200.5,447.5 200.5,461.5" stroke="#0000ff" stroke-width="1" fill="none"/>
<polyline points="200.5,472.5 200.5,480.5" stroke="#0000ff" stroke-width="1" fill="none"/>
<polyline points="200.5,480.5 200.5,496.5" stroke="#000000" stroke-width="1" fill="none"/>
<rect x="190" y="459.5" width="21" height="2" fill="#0000ff" stroke="none" stroke-width="1"/>
<polyline points="150.5,530.5 150.5,550.5" stroke="#0000ff" stroke-width="1" fill="none"/>
<polyline points="129.5,540.5 150.5,540.5" stroke="#0000ff" stroke-width="1" fill="none"/>
<polyline points="162.5,528 162.5,518.5" stroke="#0000ff" stroke-width="1" fill="none"/>
<polyline points="162.5,553 162.5,562.5" stroke="#0000ff" stroke-width="1" fill="none"/>
<polyline points="41.5,540.5 74.5,540.5" stroke="#000080" stroke-width="1" fill="none"/>
<polyline points="74.5,540.5 85.5,540.5" stroke="#000000" stroke-width="1" fill="none"/>
<polyline points="107.5,540.5 118.5,540.5" stroke="#000000" stroke-width="1" fill="none"/>
<rect x="85.5" y="537.5" width="22" height="6" fill="none" stroke="#0000ff" stroke-width="1"/>
<polyline points="118.5,540.5 129.5,540.5" stroke="#000000" stroke-width="1" fill="none"/>
<polyline points="162.5,562.5 162.5,573.5" stroke="#000000" stroke-width="1" fill="none"/>
<polyline points="162.5,573.5 162.5,584.5" stroke="#000080" stroke-width="1" fill="none"/>
<polyline points="162.5,584.5 162.5,595.5" stroke="#000000" stroke-width="1" fill="none"/>
<polyline points="162.5,617.5 162.5,628.5" stroke="#000000" stroke-width="1" fill="none"/>
<rect x="159.5" y="595.5" width="6" height="22" fill="none" stroke="#0000ff" stroke-width="1"/>
<polyline points="162.5,628.5 162.5,644.5" stroke="#800000" stroke-width="1" fill="none"/>
<polyline points="152,644.5 173,644.5" stroke="#800000" stroke-width="1" fill="none"/>
<polyline points="155,648.5 170,648.5" stroke="#800000" stroke-width="1" fill="none"/>
<polyline points="158,651.5 167,651.5" stroke="#800000" stroke-width="1" fill="none"/>
<polyline points="161.5,654.5 163.5,654.5" stroke="#800000" stroke-width="1" fill="none"/>
<polyline points="255.5,447.5 255.5,436.5" stroke="#800000" stroke-width="1" fill="none"/>
<polyline points="250,436.5 261,436.5" stroke="#800000" stroke-width="1" fill="none"/>
<polyline points="255.5,447.5 272.5,447.5" stroke="#000080" stroke-width="1" fill="none"/>
<polyline points="272.5,447.5 282.5,447.5" stroke="#000000" stroke-width="1" fill="none"/>
<polyline points="304.5,447.5 315.5,447.5" stroke="#000000" stroke-width="1" fill="none"/>
<rect x="282.5" y="444.5" width="22" height="6" fill="none" stroke="#0000ff" stroke-width="1"/>
<polyline points="315.5,447.5 332.5,447.5" stroke="#000080" stroke-width="1" fill="none"/>
<polyline points="255.5,447.5 255.5,474.5 321.5,474.5" stroke="#000080" stroke-width="1" fill="none"/>
<polyline points="332.5,447.5 354.5,447.5" stroke="#000000" stroke-width="1" fill="none"/>
<polyline points="386.5,447.5 409.5,447.5" stroke="#000000" stroke-width="1" fill="none"/>
<rect x="353.5" y="439" width="34.5" height="2" fill="#0000ff" stroke="none" stroke-width="1"/>
<rect x="366" y="436" width="9.5" height="4.5" fill="#0000ff" stroke="none" stroke-width="1"/>
<polyline points="409.5,447.5 409.5,474.5" stroke="#000080" stroke-width="1" fill="none"/>
<polyline points="321.5,474.5 332.5,474.5" stroke="#000000" stroke-width="1" fill="none"/>
<polyline points="332.5,467 332.5,484" stroke="#0000ff" stroke-width="1" fill="none"/>
<polyline points="325,469.5 330,469.5" stroke="#0000ff" stroke-width="1" fill="none"/>
<polyline points="327,467.5 327,472" stroke="#0000ff" stroke-width="1" fill="none"/>
<polyline points="336.5,474.5 342.5,474.5" stroke="#0000ff" stroke-width="1" fill="none"/>
<polyline points="342.5,474.5 354.5,474.5" stroke="#000000" stroke-width="1" fill="none"/>
<polyline points="354.5,474.5 409.5,474.5" stroke="#000080" stroke-width="1" fill="none"/>
<polyline points="409.5,474.5 419.5,474.5" stroke="#000000" stroke-width="1" fill="none"/>
<polyline points="441.5,474.5 452.5,474.5" stroke="#000000" stroke-width="1" fill="none"/>
<rect x="419.5" y="471.5" width="22" height="6" fill="none" stroke="#0000ff" stroke-width="1"/>
<polyline points="452.5,474.5 452.5,491.5" stroke="#000080" stroke-width="1" fill="none"/>
<polyline points="452.5,491.5 452.5,502.5" stroke="#800000" stroke-width="1" fill="none"/>
<polyline points="442,502.5 463,502.5" stroke="#800000" stroke-width="1" fill="none"/>
<polyline points="445,506.5 460,506.5" stroke="#800000" stroke-width="1" fill="none"/>
<polyline points="448,509.5 457,509.5" stroke="#800000" stroke-width="1" fill="none"/>
<polyline points="451.5,512.5 453.5,512.5" stroke="#800000" stroke-width="1" fill="none"/>
<polyline points="321.5,540.5 332.5,540.5" stroke="#000080" stroke-width="1" fill="none"/>
<polyline points="321.5,595.5 332.5,595.5" stroke="#000080" stroke-width="1" fill="none"/>
<polyline points="321.5,540.5 321.5,595.5" stroke="#000080" stroke-width="1" fill="none"/>
<polyline points="321.5,567.5 310.5,567.5" stroke="#800000" stroke-width="1" fill="none"/>
<polyline points="310.5,557 310.5,578" stroke="#800000" stroke-width="1" fill="none"/>
<polyline points="307.5,560 307.5,575" stroke="#800000" stroke-width="1" fill="none"/>
<polyline points="304.5,563 304.5,572" stroke="#800000" stroke-width="1" fill="none"/>
<polyline points="300.5,566.5 300.5,568.5" stroke="#800000" stroke-width="1" fill="none"/>
<polyline points="332.5,540.5 348.5,540.5" stroke="#000000" stroke-width="1" fill="none"/>
<polyline points="346.5,531.5 346.5,549.5" stroke="#0000ff" stroke-width="1" fill="none"/>
<polyline points="350.5,531.5 350.5,549.5" stroke="#0000ff" stroke-width="1" fill="none"/>
<polyline points="350.5,540.5 365.5,540.5" stroke="#000000" stroke-width="1" fill="none"/>
<polyline points="365.5,540.5 376.5,540.5" stroke="#000080" stroke-width="1" fill="none"/>
<polyline points="332.5,595.5 348.5,595.5" stroke="#000000" stroke-width="1" fill="none"/>
<polyline points="346.5,586.5 346.5,604.5" stroke="#0000ff" stroke-width="1" fill="none"/>
<polyline points="350.5,586.5 350.5,604.5" stroke="#0000ff" stroke-width="1" fill="none"/>
<polyline points="350.5,595.5 365.5,595.5" stroke="#000000" stroke-width="1" fill="none"/>
<polyline points="365.5,595.5 376.5,595.5" stroke="#000080" stroke-width="1" fill="none"/>
<polyline points="376.5,540.5 376.5,562.5" stroke="#000000" stroke-width="1" fill="none"/>
<polyline points="376.5,573.5 376.5,595.5" stroke="#000000" stroke-width="1" fill="none"/>
<polyline points="371.5,562.5 381.5,562.5" stroke="#0000ff" stroke-width="1" fill="none"/>
<polyline points="371.5,573.5 381.5,573.5" stroke="#0000ff" stroke-width="1" fill="none"/>
<rect x="368.5" y="564.5" width="15" height="7" fill="none" stroke="#0000ff" stroke-width="1"/>
<polyline points="107.5,716.5 129.5,716.5" stroke="#000000" stroke-width="1" fill="none"/>
<polyline points="161.5,716.5 184.5,716.5" stroke="#000000" stroke-width="1" fill="none"/>
<rect x="128.5" y="708" width="34.5" height="2" fill="#0000ff" stroke="none" stroke-width="1"/>
<rect x="141" y="705" width="9.5" height="4.5" fill="#0000ff" stroke="none" stroke-width="1"/>
<polyline points="107.5,743.5 129.5,743.5" stroke="#000000" stroke-width="1" fill="none"/>
<polyline points="161.5,743.5 184.5,743.5" stroke="#000000" stroke-width="1" fill="none"/>
<rect x="128.5" y="735" width="34.5" height="2" fill="#0000ff" stroke="none" stroke-width="1"/>
<rect x="141" y="732" width="9.5" height="4.5" fill="#0000ff" stroke="none" stroke-width="1"/>
<polyline points="107.5,716.5 107.5,743.5" stroke="#000080" stroke-width="1" fill="none"/>
<polyline points="107.5,743.5 107.5,754.5" stroke="#800000" stroke-width="1" fill="none"/>
<polyline points="97,754.5 118,754.5" stroke="#800000" stroke-width="1" fill="none"/>
<polyline points="100,758.5 115,758.5" stroke="#800000" stroke-width="1" fill="none"/>
<polyline points="103,761.5 112,761.5" stroke="#800000" stroke-width="1" fill="none"/>
<polyline points="106.5,764.5 108.5,764.5" stroke="#800000" stroke-width="1" fill="none"/>
<polyline points="184.5,716.5 206.5,716.5" stroke="#000080" stroke-width="1" fill="none"/>
<polyline points="184.5,743.5 206.5,743.5" stroke="#000080" stroke-width="1" fill="none"/>
<polyline points="206.5,716.5 217.5,716.5" stroke="#000000" stroke-width="1" fill="none"/>
<polyline points="239.5,716.5 250.5,716.5" stroke="#000000" stroke-width="1" fill="none"/>
<rect x="217.5" y="713.5" width="22" height="6" fill="none" stroke="#0000ff" stroke-width="1"/>
<polyline points="206.5,743.5 217.5,743.5" stroke="#000000" stroke-width="1" fill="none"/>
<polyline points="239.5,743.5 250.5,743.5" stroke="#000000" stroke-width="1" fill="none"/>
<rect x="217.5" y="740.5" width="22" height="6" fill="none" stroke="#0000ff" stroke-width="1"/>
<polyline points="255.5,716.5 255.5,705.5" stroke="#800000" stroke-width="1" fill="none"/>
<polyline points="250,705.5 261,705.5" stroke="#800000" stroke-width="1" fill="none"/>
<polyline points="250.5,716.5 255.5,716.5 255.5,743.5 250.5,743.5" stroke="#000080" stroke-width="1" fill="none"/>
<polyline points="-12.5,80.5 1236.5,80.5 1236.5,891.5" stroke="#0000ff" stroke-width="1" fill="none"/>
<polyline points="639.5,891.5 639.5,759.5 1236.5,759.5" stroke="#0000ff" stroke-width="1" fill="none"/>
<polyline points="704.5,759.5 704.5,891.5" stroke="#0000ff" stroke-width="1" fill="none"/>
<polyline points="798.5,759.5 798.5,891.5" stroke="#0000ff" stroke-width="1" fill="none"/>
<polyline points="978.5,759.5 978.5,891.5" stroke="#0000ff" stroke-width="1" fill="none"/>
<polyline points="639.5,781.5 798.5,781.5" stroke="#0000ff" stroke-width="1" fill="none"/>
<polyline points="639.5,803.5 798.5,803.5" stroke="#0000ff" stroke-width="1" fill="none"/>
<polyline points="639.5,825.5 798.5,825.5" stroke="#0000ff" stroke-width="1" fill="none"/>
<polyline points="639.5,847.5 798.5,847.5" stroke="#0000ff" stroke-width="1" fill="none"/>
<polyline points="639.5,869.5 978.5,869.5" stroke="#0000ff" stroke-width="1" fill="none"/>
<polyline points="978.5,825.5 1236.5,825.5" stroke="#0000ff" stroke-width="1" fill="none"/>
<polyline points="978.5,858.5 1236.5,858.5" stroke="#0000ff" stroke-width="1" fill="none"/>
<polyline points="1077.5,825.5 1077.5,891.5" stroke="#0000ff" stroke-width="1" fill="none"/>
<polyline points="1154.5,825.5 1154.5,858.5" stroke="#0000ff" stroke-width="1" fill="none"/>
<polyline points="1028.5,858.5 1028.5,891.5" stroke="#0000ff" stroke-width="1" fill="none"/>
</g>
<g>
<circle cx="141.5" cy="143.5" r="0.7" fill="#000080"/>
<circle cx="311.5" cy="143.5" r="0.7" fill="#000080"/>
<circle cx="481.5" cy="143.5" r="0.7" fill="#000080"/>
<circle cx="629.5" cy="143.5" r="0.7" fill="#000080"/>
<path d="M847.5 151.5L847.5 195.5L891.5 173.5Z" stroke="#0000ff" stroke-width="1" fill="none"/>
<path d="M1110.5 140.5L1110.5 184.5L1154.5 162.5Z" stroke="#0000ff" stroke-width="1" fill="none"/>
<circle cx="542.5" cy="518.5" r="2.9" fill="#fffcf8" stroke="#000" stroke-width="1"/>
<circle cx="542.5" cy="529.5" r="2.9" fill="#fffcf8" stroke="#000" stroke-width="1"/>
<circle cx="542.5" cy="562.5" r="2.9" fill="#fffcf8" stroke="#000" stroke-width="1"/>
<circle cx="542.5" cy="573.5" r="2.9" fill="#fffcf8" stroke="#000" stroke-width="1"/>
<circle cx="680.5" cy="518.5" r="2.9" fill="#fffcf8" stroke="#000" stroke-width="1"/>
<polyline points="726.5,409.5 734.5,401.5" stroke="#000080" stroke-width="1" fill="none"/>
<polyline points="726.5,420.5 734.5,412.5" stroke="#000080" stroke-width="1" fill="none"/>
<polyline points="726.5,431.5 734.5,423.5" stroke="#000080" stroke-width="1" fill="none"/>
<polyline points="726.5,442.5 734.5,434.5" stroke="#000080" stroke-width="1" fill="none"/>
<polyline points="726.5,453.5 734.5,445.5" stroke="#000080" stroke-width="1" fill="none"/>
<polyline points="726.5,464.5 734.5,456.5" stroke="#000080" stroke-width="1" fill="none"/>
<polyline points="726.5,474.5 734.5,466.5" stroke="#000080" stroke-width="1" fill="none"/>
<polyline points="726.5,485.5 734.5,477.5" stroke="#000080" stroke-width="1" fill="none"/>
<path d="M737.5 474.5L737.5 387.5L743.5 381.5L765.5 381.5L770.5 387.5L770.5 546.5L809.5 579.5L968.5 579.5L989.5 562.5L989.5 485.5" stroke="#000080" stroke-width="3" fill="none" stroke-linejoin="miter"/>
<polyline points="781.5,409.5 773.5,401.5" stroke="#000080" stroke-width="1" fill="none"/>
<polyline points="781.5,420.5 773.5,412.5" stroke="#000080" stroke-width="1" fill="none"/>
<polyline points="781.5,431.5 773.5,423.5" stroke="#000080" stroke-width="1" fill="none"/>
<polyline points="781.5,442.5 773.5,434.5" stroke="#000080" stroke-width="1" fill="none"/>
<polyline points="781.5,453.5 773.5,445.5" stroke="#000080" stroke-width="1" fill="none"/>
<polyline points="781.5,464.5 773.5,456.5" stroke="#000080" stroke-width="1" fill="none"/>
<polyline points="781.5,474.5 773.5,466.5" stroke="#000080" stroke-width="1" fill="none"/>
<polyline points="781.5,485.5 773.5,477.5" stroke="#000080" stroke-width="1" fill="none"/>
<polyline points="1000.5,496.5 992.5,488.5" stroke="#000080" stroke-width="1" fill="none"/>
<polyline points="1000.5,507.5 992.5,499.5" stroke="#000080" stroke-width="1" fill="none"/>
<polyline points="1000.5,518.5 992.5,510.5" stroke="#000080" stroke-width="1" fill="none"/>
<polyline points="1000.5,529.5 992.5,521.5" stroke="#000080" stroke-width="1" fill="none"/>
<polyline points="1000.5,540.5 992.5,532.5" stroke="#000080" stroke-width="1" fill="none"/>
<polyline points="1000.5,551.5 992.5,543.5" stroke="#000080" stroke-width="1" fill="none"/>
<polyline points="1000.5,562.5 992.5,554.5" stroke="#000080" stroke-width="1" fill="none"/>
<polyline points="1000.5,573.5 992.5,565.5" stroke="#000080" stroke-width="1" fill="none"/>
<path d="M1155.5 492.5L1163.5 500.5M1155.5 500.5L1163.5 492.5" stroke="#ff0000" stroke-width="1" fill="none"/>
<path d="M1155.5 503.5L1163.5 511.5M1155.5 511.5L1163.5 503.5" stroke="#ff0000" stroke-width="1" fill="none"/>
<path d="M1155.5 514.5L1163.5 522.5M1155.5 522.5L1163.5 514.5" stroke="#ff0000" stroke-width="1" fill="none"/>
<path d="M1155.5 525.5L1163.5 533.5M1155.5 533.5L1163.5 525.5" stroke="#ff0000" stroke-width="1" fill="none"/>
<path d="M1155.5 536.5L1163.5 544.5M1155.5 544.5L1163.5 536.5" stroke="#ff0000" stroke-width="1" fill="none"/>
<path d="M1155.5 547.5L1163.5 555.5M1155.5 555.5L1163.5 547.5" stroke="#ff0000" stroke-width="1" fill="none"/>
<path d="M1155.5 558.5L1163.5 566.5M1155.5 566.5L1163.5 558.5" stroke="#ff0000" stroke-width="1" fill="none"/>
<path d="M936.5 662.5L944.5 670.5M936.5 670.5L944.5 662.5" stroke="#ff0000" stroke-width="1" fill="none"/>
<path d="M936.5 673.5L944.5 681.5M936.5 681.5L944.5 673.5" stroke="#ff0000" stroke-width="1" fill="none"/>
<path d="M936.5 684.5L944.5 692.5M936.5 692.5L944.5 684.5" stroke="#ff0000" stroke-width="1" fill="none"/>
<circle cx="134.8" cy="454.9" r="1.8" fill="#fffcf8" stroke="#0000ff" stroke-width="1"/>
<circle cx="134.8" cy="471.7" r="1.8" fill="#fffcf8" stroke="#0000ff" stroke-width="1"/>
<path d="M135.8 456.5L143.9 473.6" stroke="#0000ff" stroke-width="1"/>
<path d="M200.5 460.5L190.2 472.8L210.8 472.8Z" fill="#0000ff"/>
<circle cx="154.3" cy="540.5" r="13.9" fill="none" stroke="#0000ff" stroke-width="1"/>
<path d="M150.5 536.5L162.5 528M150.5 544.5L162.5 553" stroke="#0000ff" stroke-width="1" fill="none"/>
<path d="M161.5 552.5L155 551L158.5 546.5Z" fill="#0000ff"/>
<circle cx="356" cy="446.8" r="1.6" fill="#fffcf8" stroke="#0000ff" stroke-width="1"/>
<circle cx="385" cy="446.8" r="1.6" fill="#fffcf8" stroke="#0000ff" stroke-width="1"/>
<path d="M338.8 466Q333.7 474.5 338.8 482" stroke="#0000ff" stroke-width="1" fill="none"/>
<circle cx="131" cy="715.8" r="1.6" fill="#fffcf8" stroke="#0000ff" stroke-width="1"/>
<circle cx="160" cy="715.8" r="1.6" fill="#fffcf8" stroke="#0000ff" stroke-width="1"/>
<circle cx="131" cy="742.8" r="1.6" fill="#fffcf8" stroke="#0000ff" stroke-width="1"/>
<circle cx="160" cy="742.8" r="1.6" fill="#fffcf8" stroke="#0000ff" stroke-width="1"/>
<circle cx="85.5" cy="370.5" r="2.2" fill="#000080"/>
<circle cx="162.5" cy="239.5" r="2.2" fill="#000080"/>
<circle cx="255.5" cy="370.5" r="2.2" fill="#000080"/>
<circle cx="332.5" cy="233.5" r="2.2" fill="#000080"/>
<circle cx="425.5" cy="370.5" r="2.2" fill="#000080"/>
<circle cx="502.5" cy="233.5" r="2.2" fill="#000080"/>
<circle cx="573.5" cy="370.5" r="2.2" fill="#000080"/>
<circle cx="946.5" cy="173.5" r="2.2" fill="#000080"/>
<circle cx="869.5" cy="129.5" r="2.2" fill="#000080"/>
<circle cx="1006.5" cy="173.5" r="2.2" fill="#000080"/>
<circle cx="1061.5" cy="173.5" r="2.2" fill="#000080"/>
<circle cx="1083.5" cy="113.5" r="2.2" fill="#000080"/>
<circle cx="1187.5" cy="162.5" r="2.2" fill="#000080"/>
<circle cx="814.5" cy="261.5" r="2.2" fill="#000080"/>
<circle cx="995.5" cy="288.5" r="2.2" fill="#000080"/>
<circle cx="995.5" cy="299.5" r="2.2" fill="#000080"/>
<circle cx="814.5" cy="288.5" r="2.2" fill="#000080"/>
<circle cx="754.5" cy="507.5" r="2.2" fill="#000080"/>
<circle cx="929.5" cy="540.5" r="2.2" fill="#000080"/>
<circle cx="1165.5" cy="398.5" r="2.2" fill="#000080"/>
<circle cx="1176.5" cy="409.5" r="2.2" fill="#000080"/>
<circle cx="968.5" cy="431.5" r="2.2" fill="#000080"/>
<circle cx="957.5" cy="710.5" r="2.2" fill="#000080"/>
<circle cx="798.5" cy="677.5" r="2.2" fill="#000080"/>
<circle cx="135.5" cy="431.5" r="2.2" fill="#000080"/>
<circle cx="162.5" cy="431.5" r="2.2" fill="#000080"/>
<circle cx="135.5" cy="496.5" r="2.2" fill="#000080"/>
<circle cx="162.5" cy="496.5" r="2.2" fill="#000080"/>
<circle cx="255.5" cy="447.5" r="2.2" fill="#000080"/>
<circle cx="409.5" cy="447.5" r="2.2" fill="#000080"/>
<circle cx="409.5" cy="474.5" r="2.2" fill="#000080"/>
<circle cx="321.5" cy="567.5" r="2.2" fill="#000080"/>
<circle cx="376.5" cy="540.5" r="2.2" fill="#000080"/>
<circle cx="376.5" cy="595.5" r="2.2" fill="#000080"/>
<circle cx="107.5" cy="743.5" r="2.2" fill="#000080"/>
<circle cx="255.5" cy="716.5" r="2.2" fill="#000080"/>
</g>
<g>
<text transform="translate(28 105.5) scale(0.9 1)" fill="#800000" stroke="#800000" text-anchor="end">VCC</text>
<text transform="translate(51 94.5) scale(0.9 1)" fill="#000080" stroke="#000080">R3</text>
<text transform="translate(51 115) scale(0.9 1)" fill="#000080" stroke="#000080">103</text>
<text transform="translate(82.2 126.5) rotate(-90) scale(0.95 1)" fill="#000000" stroke="#000000" font-size="9.94">9</text>
<text transform="translate(173.5 144) scale(0.9 1)" fill="#000080" stroke="#000080">D1</text>
<text transform="translate(173.5 155) scale(0.9 1)" fill="#000080" stroke="#000080">DPY_LED</text>
<text transform="translate(87.5 147) rotate(-90) scale(0.95 1)" fill="#000080" stroke="#000080" font-size="9.94">9</text>
<text transform="translate(151 151) rotate(-90) scale(0.95 1)" fill="#000080" stroke="#000080" font-size="9.94">dp</text>
<text transform="translate(108.1 156.5) rotate(-90) scale(0.95 1)" fill="#000080" stroke="#000080" font-size="9.94">b</text>
<text transform="translate(133 156) rotate(-90) scale(0.95 1)" fill="#000080" stroke="#000080" font-size="8.47">c</text>
<text transform="translate(94 171.5) rotate(-90) scale(0.95 1)" fill="#000080" stroke="#000080" font-size="9.94">a</text>
<text transform="translate(114.5 170.5) rotate(-90) scale(0.95 1)" fill="#000080" stroke="#000080" font-size="9.94">g</text>
<text transform="translate(138.5 171.5) rotate(-90) scale(0.95 1)" fill="#000080" stroke="#000080" font-size="9.94">d</text>
<text transform="translate(108.5 186.5) rotate(-90) scale(0.95 1)" fill="#000080" stroke="#000080" font-size="9.94">f</text>
<text transform="translate(132 185) rotate(-90) scale(0.95 1)" fill="#000080" stroke="#000080" font-size="8.47">e</text>
<text transform="translate(88.3 193.5) rotate(-90) scale(0.95 1)" fill="#000080" stroke="#000080" font-size="9.94">a</text>
<text transform="translate(82.2 209) rotate(-90) scale(0.95 1)" fill="#000000" stroke="#000000" text-anchor="end" font-size="9.94">1</text>
<text transform="translate(82.2 263.5) rotate(-90) scale(0.95 1)" fill="#000000" stroke="#000000" font-size="9.94">3</text>
<text transform="translate(89 279.5) rotate(-90) scale(0.95 1)" fill="#000000" stroke="#000000" text-anchor="end" font-size="9.94">Q0</text>
<text transform="translate(99.3 193.5) rotate(-90) scale(0.95 1)" fill="#000080" stroke="#000080" font-size="9.94">b</text>
<text transform="translate(93.2 209) rotate(-90) scale(0.95 1)" fill="#000000" stroke="#000000" text-anchor="end" font-size="9.94">2</text>
<text transform="translate(93.2 263.5) rotate(-90) scale(0.95 1)" fill="#000000" stroke="#000000" font-size="9.94">4</text>
<text transform="translate(100 279.5) rotate(-90) scale(0.95 1)" fill="#000000" stroke="#000000" text-anchor="end" font-size="9.94">Q1</text>
<text transform="translate(110.3 193.5) rotate(-90) scale(0.95 1)" fill="#000080" stroke="#000080" font-size="9.94">c</text>
<text transform="translate(104.2 209) rotate(-90) scale(0.95 1)" fill="#000000" stroke="#000000" text-anchor="end" font-size="9.94">3</text>
<text transform="translate(104.2 263.5) rotate(-90) scale(0.95 1)" fill="#000000" stroke="#000000" font-size="9.94">5</text>
<text transform="translate(111 279.5) rotate(-90) scale(0.95 1)" fill="#000000" stroke="#000000" text-anchor="end" font-size="9.94">Q2</text>
<text transform="translate(121.3 193.5) rotate(-90) scale(0.95 1)" fill="#000080" stroke="#000080" font-size="9.94">d</text>
<text transform="translate(115.2 209) rotate(-90) scale(0.95 1)" fill="#000000" stroke="#000000" text-anchor="end" font-size="9.94">4</text>
<text transform="translate(115.2 263.5) rotate(-90) scale(0.95 1)" fill="#000000" stroke="#000000" font-size="9.94">6</text>
<text transform="translate(122 279.5) rotate(-90) scale(0.95 1)" fill="#000000" stroke="#000000" text-anchor="end" font-size="9.94">Q3</text>
<text transform="translate(132.3 193.5) rotate(-90) scale(0.95 1)" fill="#000080" stroke="#000080" font-size="8.47">e</text>
<text transform="translate(126.2 209) rotate(-90) scale(0.95 1)" fill="#000000" stroke="#000000" text-anchor="end" font-size="9.94">5</text>
<text transform="translate(126.2 263.5) rotate(-90) scale(0.95 1)" fill="#000000" stroke="#000000" font-size="9.94">10</text>
<text transform="translate(133 279.5) rotate(-90) scale(0.95 1)" fill="#000000" stroke="#000000" text-anchor="end" font-size="9.94">Q4</text>
<text transform="translate(143.3 193.5) rotate(-90) scale(0.95 1)" fill="#000080" stroke="#000080" font-size="9.94">f</text>
<text transform="translate(137.2 209) rotate(-90) scale(0.95 1)" fill="#000000" stroke="#000000" text-anchor="end" font-size="9.94">6</text>
<text transform="translate(137.2 263.5) rotate(-90) scale(0.95 1)" fill="#000000" stroke="#000000" font-size="9.94">11</text>
<text transform="translate(144 279.5) rotate(-90) scale(0.95 1)" fill="#000000" stroke="#000000" text-anchor="end" font-size="9.94">Q5</text>
<text transform="translate(154.3 193.5) rotate(-90) scale(0.95 1)" fill="#000080" stroke="#000080" font-size="9.94">g</text>
<text transform="translate(148.2 209) rotate(-90) scale(0.95 1)" fill="#000000" stroke="#000000" text-anchor="end" font-size="9.94">7</text>
<text transform="translate(148.2 263.5) rotate(-90) scale(0.95 1)" fill="#000000" stroke="#000000" font-size="9.94">12</text>
<text transform="translate(155 279.5) rotate(-90) scale(0.95 1)" fill="#000000" stroke="#000000" text-anchor="end" font-size="9.94">Q6</text>
<text transform="translate(164.5 193.5) rotate(-90) scale(0.95 1)" fill="#000080" stroke="#000080" font-size="9.94">dp</text>
<text transform="translate(159.2 209) rotate(-90) scale(0.95 1)" fill="#000000" stroke="#000000" text-anchor="end" font-size="9.94">8</text>
<text transform="translate(159.2 263.5) rotate(-90) scale(0.95 1)" fill="#000000" stroke="#000000" font-size="9.94">13</text>
<text transform="translate(166 279.5) rotate(-90) scale(0.95 1)" fill="#000000" stroke="#000000" text-anchor="end" font-size="9.94">Q7</text>
<text transform="translate(173.5 281) scale(0.9 1)" fill="#000080" stroke="#000080">U1</text>
<text transform="translate(173.5 292) scale(0.9 1)" fill="#000080" stroke="#000080">74LS164</text>
<text transform="translate(82.2 335.8) rotate(-90) scale(0.95 1)" fill="#000000" stroke="#000000" text-anchor="end" font-size="9.94">1</text>
<text transform="translate(89 318.5) rotate(-90) scale(0.95 1)" fill="#000000" stroke="#000000" font-size="9.94">A</text>
<text transform="translate(93.2 335.8) rotate(-90) scale(0.95 1)" fill="#000000" stroke="#000000" text-anchor="end" font-size="9.94">2</text>
<text transform="translate(100 318.5) rotate(-90) scale(0.95 1)" fill="#000000" stroke="#000000" font-size="9.94">B</text>
<text transform="translate(148.2 335.8) rotate(-90) scale(0.95 1)" fill="#000000" stroke="#000000" text-anchor="end" font-size="9.94">8</text>
<text transform="translate(155 318.5) rotate(-90) scale(0.95 1)" fill="#000000" stroke="#000000" font-size="9.94">CLK</text>
<text transform="translate(159.2 335.8) rotate(-90) scale(0.95 1)" fill="#000000" stroke="#000000" text-anchor="end" font-size="9.94">9</text>
<text transform="translate(166 318.5) rotate(-90) scale(0.95 1)" fill="#000000" stroke="#000000" font-size="9.94">MR</text>
<text transform="translate(148.7 369.3) rotate(-90) scale(0.95 1)" fill="#800000" stroke="#800000" font-size="9.94">CLK</text>
<text transform="translate(82.7 386.5) rotate(-90) scale(0.95 1)" fill="#800000" stroke="#800000" font-size="9.94">DIN</text>
<text transform="translate(198 105.5) scale(0.9 1)" fill="#800000" stroke="#800000" text-anchor="end">VCC</text>
<text transform="translate(221 94.5) scale(0.9 1)" fill="#000080" stroke="#000080">R4</text>
<text transform="translate(221 115) scale(0.9 1)" fill="#000080" stroke="#000080">103</text>
<text transform="translate(252.2 126.5) rotate(-90) scale(0.95 1)" fill="#000000" stroke="#000000" font-size="9.94">9</text>
<text transform="translate(343.5 144) scale(0.9 1)" fill="#000080" stroke="#000080">D2</text>
<text transform="translate(343.5 155) scale(0.9 1)" fill="#000080" stroke="#000080">DPY_LED</text>
<text transform="translate(257.5 147) rotate(-90) scale(0.95 1)" fill="#000080" stroke="#000080" font-size="9.94">9</text>
<text transform="translate(321 151) rotate(-90) scale(0.95 1)" fill="#000080" stroke="#000080" font-size="9.94">dp</text>
<text transform="translate(278.1 156.5) rotate(-90) scale(0.95 1)" fill="#000080" stroke="#000080" font-size="9.94">b</text>
<text transform="translate(303 156) rotate(-90) scale(0.95 1)" fill="#000080" stroke="#000080" font-size="8.47">c</text>
<text transform="translate(264 171.5) rotate(-90) scale(0.95 1)" fill="#000080" stroke="#000080" font-size="9.94">a</text>
<text transform="translate(284.5 170.5) rotate(-90) scale(0.95 1)" fill="#000080" stroke="#000080" font-size="9.94">g</text>
<text transform="translate(308.5 171.5) rotate(-90) scale(0.95 1)" fill="#000080" stroke="#000080" font-size="9.94">d</text>
<text transform="translate(278.5 186.5) rotate(-90) scale(0.95 1)" fill="#000080" stroke="#000080" font-size="9.94">f</text>
<text transform="translate(302 185) rotate(-90) scale(0.95 1)" fill="#000080" stroke="#000080" font-size="8.47">e</text>
<text transform="translate(258.3 193.5) rotate(-90) scale(0.95 1)" fill="#000080" stroke="#000080" font-size="9.94">a</text>
<text transform="translate(252.2 209) rotate(-90) scale(0.95 1)" fill="#000000" stroke="#000000" text-anchor="end" font-size="9.94">1</text>
<text transform="translate(252.2 263.5) rotate(-90) scale(0.95 1)" fill="#000000" stroke="#000000" font-size="9.94">3</text>
<text transform="translate(259 279.5) rotate(-90) scale(0.95 1)" fill="#000000" stroke="#000000" text-anchor="end" font-size="9.94">Q0</text>
<text transform="translate(269.3 193.5) rotate(-90) scale(0.95 1)" fill="#000080" stroke="#000080" font-size="9.94">b</text>
<text transform="translate(263.2 209) rotate(-90) scale(0.95 1)" fill="#000000" stroke="#000000" text-anchor="end" font-size="9.94">2</text>
<text transform="translate(263.2 263.5) rotate(-90) scale(0.95 1)" fill="#000000" stroke="#000000" font-size="9.94">4</text>
<text transform="translate(270 279.5) rotate(-90) scale(0.95 1)" fill="#000000" stroke="#000000" text-anchor="end" font-size="9.94">Q1</text>
<text transform="translate(280.3 193.5) rotate(-90) scale(0.95 1)" fill="#000080" stroke="#000080" font-size="9.94">c</text>
<text transform="translate(274.2 209) rotate(-90) scale(0.95 1)" fill="#000000" stroke="#000000" text-anchor="end" font-size="9.94">3</text>
<text transform="translate(274.2 263.5) rotate(-90) scale(0.95 1)" fill="#000000" stroke="#000000" font-size="9.94">5</text>
<text transform="translate(281 279.5) rotate(-90) scale(0.95 1)" fill="#000000" stroke="#000000" text-anchor="end" font-size="9.94">Q2</text>
<text transform="translate(291.3 193.5) rotate(-90) scale(0.95 1)" fill="#000080" stroke="#000080" font-size="9.94">d</text>
<text transform="translate(285.2 209) rotate(-90) scale(0.95 1)" fill="#000000" stroke="#000000" text-anchor="end" font-size="9.94">4</text>
<text transform="translate(285.2 263.5) rotate(-90) scale(0.95 1)" fill="#000000" stroke="#000000" font-size="9.94">6</text>
<text transform="translate(292 279.5) rotate(-90) scale(0.95 1)" fill="#000000" stroke="#000000" text-anchor="end" font-size="9.94">Q3</text>
<text transform="translate(302.3 193.5) rotate(-90) scale(0.95 1)" fill="#000080" stroke="#000080" font-size="8.47">e</text>
<text transform="translate(296.2 209) rotate(-90) scale(0.95 1)" fill="#000000" stroke="#000000" text-anchor="end" font-size="9.94">5</text>
<text transform="translate(296.2 263.5) rotate(-90) scale(0.95 1)" fill="#000000" stroke="#000000" font-size="9.94">10</text>
<text transform="translate(303 279.5) rotate(-90) scale(0.95 1)" fill="#000000" stroke="#000000" text-anchor="end" font-size="9.94">Q4</text>
<text transform="translate(313.3 193.5) rotate(-90) scale(0.95 1)" fill="#000080" stroke="#000080" font-size="9.94">f</text>
<text transform="translate(307.2 209) rotate(-90) scale(0.95 1)" fill="#000000" stroke="#000000" text-anchor="end" font-size="9.94">6</text>
<text transform="translate(307.2 263.5) rotate(-90) scale(0.95 1)" fill="#000000" stroke="#000000" font-size="9.94">11</text>
<text transform="translate(314 279.5) rotate(-90) scale(0.95 1)" fill="#000000" stroke="#000000" text-anchor="end" font-size="9.94">Q5</text>
<text transform="translate(324.3 193.5) rotate(-90) scale(0.95 1)" fill="#000080" stroke="#000080" font-size="9.94">g</text>
<text transform="translate(318.2 209) rotate(-90) scale(0.95 1)" fill="#000000" stroke="#000000" text-anchor="end" font-size="9.94">7</text>
<text transform="translate(318.2 263.5) rotate(-90) scale(0.95 1)" fill="#000000" stroke="#000000" font-size="9.94">12</text>
<text transform="translate(325 279.5) rotate(-90) scale(0.95 1)" fill="#000000" stroke="#000000" text-anchor="end" font-size="9.94">Q6</text>
<text transform="translate(334.5 193.5) rotate(-90) scale(0.95 1)" fill="#000080" stroke="#000080" font-size="9.94">dp</text>
<text transform="translate(329.2 209) rotate(-90) scale(0.95 1)" fill="#000000" stroke="#000000" text-anchor="end" font-size="9.94">8</text>
<text transform="translate(329.2 263.5) rotate(-90) scale(0.95 1)" fill="#000000" stroke="#000000" font-size="9.94">13</text>
<text transform="translate(336 279.5) rotate(-90) scale(0.95 1)" fill="#000000" stroke="#000000" text-anchor="end" font-size="9.94">Q7</text>
<text transform="translate(343.5 281) scale(0.9 1)" fill="#000080" stroke="#000080">U2</text>
<text transform="translate(343.5 292) scale(0.9 1)" fill="#000080" stroke="#000080">74LS164</text>
<text transform="translate(252.2 335.8) rotate(-90) scale(0.95 1)" fill="#000000" stroke="#000000" text-anchor="end" font-size="9.94">1</text>
<text transform="translate(259 318.5) rotate(-90) scale(0.95 1)" fill="#000000" stroke="#000000" font-size="9.94">A</text>
<text transform="translate(263.2 335.8) rotate(-90) scale(0.95 1)" fill="#000000" stroke="#000000" text-anchor="end" font-size="9.94">2</text>
<text transform="translate(270 318.5) rotate(-90) scale(0.95 1)" fill="#000000" stroke="#000000" font-size="9.94">B</text>
<text transform="translate(318.2 335.8) rotate(-90) scale(0.95 1)" fill="#000000" stroke="#000000" text-anchor="end" font-size="9.94">8</text>
<text transform="translate(325 318.5) rotate(-90) scale(0.95 1)" fill="#000000" stroke="#000000" font-size="9.94">CLK</text>
<text transform="translate(329.2 335.8) rotate(-90) scale(0.95 1)" fill="#000000" stroke="#000000" text-anchor="end" font-size="9.94">9</text>
<text transform="translate(336 318.5) rotate(-90) scale(0.95 1)" fill="#000000" stroke="#000000" font-size="9.94">MR</text>
<text transform="translate(318.7 369.3) rotate(-90) scale(0.95 1)" fill="#800000" stroke="#800000" font-size="9.94">CLK</text>
<text transform="translate(368 105.5) scale(0.9 1)" fill="#800000" stroke="#800000" text-anchor="end">VCC</text>
<text transform="translate(391 94.5) scale(0.9 1)" fill="#000080" stroke="#000080">R5</text>
<text transform="translate(391 115) scale(0.9 1)" fill="#000080" stroke="#000080">103</text>
<text transform="translate(422.2 126.5) rotate(-90) scale(0.95 1)" fill="#000000" stroke="#000000" font-size="9.94">9</text>
<text transform="translate(513.5 144) scale(0.9 1)" fill="#000080" stroke="#000080">D3</text>
<text transform="translate(513.5 155) scale(0.9 1)" fill="#000080" stroke="#000080">DPY_LED</text>
<text transform="translate(427.5 147) rotate(-90) scale(0.95 1)" fill="#000080" stroke="#000080" font-size="9.94">9</text>
<text transform="translate(491 151) rotate(-90) scale(0.95 1)" fill="#000080" stroke="#000080" font-size="9.94">dp</text>
<text transform="translate(448.1 156.5) rotate(-90) scale(0.95 1)" fill="#000080" stroke="#000080" font-size="9.94">b</text>
<text transform="translate(473 156) rotate(-90) scale(0.95 1)" fill="#000080" stroke="#000080" font-size="8.47">c</text>
<text transform="translate(434 171.5) rotate(-90) scale(0.95 1)" fill="#000080" stroke="#000080" font-size="9.94">a</text>
<text transform="translate(454.5 170.5) rotate(-90) scale(0.95 1)" fill="#000080" stroke="#000080" font-size="9.94">g</text>
<text transform="translate(478.5 171.5) rotate(-90) scale(0.95 1)" fill="#000080" stroke="#000080" font-size="9.94">d</text>
<text transform="translate(448.5 186.5) rotate(-90) scale(0.95 1)" fill="#000080" stroke="#000080" font-size="9.94">f</text>
<text transform="translate(472 185) rotate(-90) scale(0.95 1)" fill="#000080" stroke="#000080" font-size="8.47">e</text>
<text transform="translate(428.3 193.5) rotate(-90) scale(0.95 1)" fill="#000080" stroke="#000080" font-size="9.94">a</text>
<text transform="translate(422.2 209) rotate(-90) scale(0.95 1)" fill="#000000" stroke="#000000" text-anchor="end" font-size="9.94">1</text>
<text transform="translate(422.2 263.5) rotate(-90) scale(0.95 1)" fill="#000000" stroke="#000000" font-size="9.94">3</text>
<text transform="translate(429 279.5) rotate(-90) scale(0.95 1)" fill="#000000" stroke="#000000" text-anchor="end" font-size="9.94">Q0</text>
<text transform="translate(439.3 193.5) rotate(-90) scale(0.95 1)" fill="#000080" stroke="#000080" font-size="9.94">b</text>
<text transform="translate(433.2 209) rotate(-90) scale(0.95 1)" fill="#000000" stroke="#000000" text-anchor="end" font-size="9.94">2</text>
<text transform="translate(433.2 263.5) rotate(-90) scale(0.95 1)" fill="#000000" stroke="#000000" font-size="9.94">4</text>
<text transform="translate(440 279.5) rotate(-90) scale(0.95 1)" fill="#000000" stroke="#000000" text-anchor="end" font-size="9.94">Q1</text>
<text transform="translate(450.3 193.5) rotate(-90) scale(0.95 1)" fill="#000080" stroke="#000080" font-size="9.94">c</text>
<text transform="translate(444.2 209) rotate(-90) scale(0.95 1)" fill="#000000" stroke="#000000" text-anchor="end" font-size="9.94">3</text>
<text transform="translate(444.2 263.5) rotate(-90) scale(0.95 1)" fill="#000000" stroke="#000000" font-size="9.94">5</text>
<text transform="translate(451 279.5) rotate(-90) scale(0.95 1)" fill="#000000" stroke="#000000" text-anchor="end" font-size="9.94">Q2</text>
<text transform="translate(461.3 193.5) rotate(-90) scale(0.95 1)" fill="#000080" stroke="#000080" font-size="9.94">d</text>
<text transform="translate(455.2 209) rotate(-90) scale(0.95 1)" fill="#000000" stroke="#000000" text-anchor="end" font-size="9.94">4</text>
<text transform="translate(455.2 263.5) rotate(-90) scale(0.95 1)" fill="#000000" stroke="#000000" font-size="9.94">6</text>
<text transform="translate(462 279.5) rotate(-90) scale(0.95 1)" fill="#000000" stroke="#000000" text-anchor="end" font-size="9.94">Q3</text>
<text transform="translate(472.3 193.5) rotate(-90) scale(0.95 1)" fill="#000080" stroke="#000080" font-size="8.47">e</text>
<text transform="translate(466.2 209) rotate(-90) scale(0.95 1)" fill="#000000" stroke="#000000" text-anchor="end" font-size="9.94">5</text>
<text transform="translate(466.2 263.5) rotate(-90) scale(0.95 1)" fill="#000000" stroke="#000000" font-size="9.94">10</text>
<text transform="translate(473 279.5) rotate(-90) scale(0.95 1)" fill="#000000" stroke="#000000" text-anchor="end" font-size="9.94">Q4</text>
<text transform="translate(483.3 193.5) rotate(-90) scale(0.95 1)" fill="#000080" stroke="#000080" font-size="9.94">f</text>
<text transform="translate(477.2 209) rotate(-90) scale(0.95 1)" fill="#000000" stroke="#000000" text-anchor="end" font-size="9.94">6</text>
<text transform="translate(477.2 263.5) rotate(-90) scale(0.95 1)" fill="#000000" stroke="#000000" font-size="9.94">11</text>
<text transform="translate(484 279.5) rotate(-90) scale(0.95 1)" fill="#000000" stroke="#000000" text-anchor="end" font-size="9.94">Q5</text>
<text transform="translate(494.3 193.5) rotate(-90) scale(0.95 1)" fill="#000080" stroke="#000080" font-size="9.94">g</text>
<text transform="translate(488.2 209) rotate(-90) scale(0.95 1)" fill="#000000" stroke="#000000" text-anchor="end" font-size="9.94">7</text>
<text transform="translate(488.2 263.5) rotate(-90) scale(0.95 1)" fill="#000000" stroke="#000000" font-size="9.94">12</text>
<text transform="translate(495 279.5) rotate(-90) scale(0.95 1)" fill="#000000" stroke="#000000" text-anchor="end" font-size="9.94">Q6</text>
<text transform="translate(504.5 193.5) rotate(-90) scale(0.95 1)" fill="#000080" stroke="#000080" font-size="9.94">dp</text>
<text transform="translate(499.2 209) rotate(-90) scale(0.95 1)" fill="#000000" stroke="#000000" text-anchor="end" font-size="9.94">8</text>
<text transform="translate(499.2 263.5) rotate(-90) scale(0.95 1)" fill="#000000" stroke="#000000" font-size="9.94">13</text>
<text transform="translate(506 279.5) rotate(-90) scale(0.95 1)" fill="#000000" stroke="#000000" text-anchor="end" font-size="9.94">Q7</text>
<text transform="translate(513.5 281) scale(0.9 1)" fill="#000080" stroke="#000080">U3</text>
<text transform="translate(513.5 292) scale(0.9 1)" fill="#000080" stroke="#000080">74LS164</text>
<text transform="translate(422.2 335.8) rotate(-90) scale(0.95 1)" fill="#000000" stroke="#000000" text-anchor="end" font-size="9.94">1</text>
<text transform="translate(429 318.5) rotate(-90) scale(0.95 1)" fill="#000000" stroke="#000000" font-size="9.94">A</text>
<text transform="translate(433.2 335.8) rotate(-90) scale(0.95 1)" fill="#000000" stroke="#000000" text-anchor="end" font-size="9.94">2</text>
<text transform="translate(440 318.5) rotate(-90) scale(0.95 1)" fill="#000000" stroke="#000000" font-size="9.94">B</text>
<text transform="translate(488.2 335.8) rotate(-90) scale(0.95 1)" fill="#000000" stroke="#000000" text-anchor="end" font-size="9.94">8</text>
<text transform="translate(495 318.5) rotate(-90) scale(0.95 1)" fill="#000000" stroke="#000000" font-size="9.94">CLK</text>
<text transform="translate(499.2 335.8) rotate(-90) scale(0.95 1)" fill="#000000" stroke="#000000" text-anchor="end" font-size="9.94">9</text>
<text transform="translate(506 318.5) rotate(-90) scale(0.95 1)" fill="#000000" stroke="#000000" font-size="9.94">MR</text>
<text transform="translate(488.7 369.3) rotate(-90) scale(0.95 1)" fill="#800000" stroke="#800000" font-size="9.94">CLK</text>
<text transform="translate(522 105.5) scale(0.9 1)" fill="#800000" stroke="#800000" text-anchor="end">VCC</text>
<text transform="translate(539 94.5) scale(0.9 1)" fill="#000080" stroke="#000080">R6</text>
<text transform="translate(539 115) scale(0.9 1)" fill="#000080" stroke="#000080">103</text>
<text transform="translate(570.2 126.5) rotate(-90) scale(0.95 1)" fill="#000000" stroke="#000000" font-size="9.94">9</text>
<text transform="translate(661.5 144) scale(0.9 1)" fill="#000080" stroke="#000080">D4</text>
<text transform="translate(661.5 155) scale(0.9 1)" fill="#000080" stroke="#000080">DPY_LED</text>
<text transform="translate(575.5 147) rotate(-90) scale(0.95 1)" fill="#000080" stroke="#000080" font-size="9.94">9</text>
<text transform="translate(639 151) rotate(-90) scale(0.95 1)" fill="#000080" stroke="#000080" font-size="9.94">dp</text>
<text transform="translate(596.1 156.5) rotate(-90) scale(0.95 1)" fill="#000080" stroke="#000080" font-size="9.94">b</text>
<text transform="translate(621 156) rotate(-90) scale(0.95 1)" fill="#000080" stroke="#000080" font-size="8.47">c</text>
<text transform="translate(582 171.5) rotate(-90) scale(0.95 1)" fill="#000080" stroke="#000080" font-size="9.94">a</text>
<text transform="translate(602.5 170.5) rotate(-90) scale(0.95 1)" fill="#000080" stroke="#000080" font-size="9.94">g</text>
<text transform="translate(626.5 171.5) rotate(-90) scale(0.95 1)" fill="#000080" stroke="#000080" font-size="9.94">d</text>
<text transform="translate(596.5 186.5) rotate(-90) scale(0.95 1)" fill="#000080" stroke="#000080" font-size="9.94">f</text>
<text transform="translate(620 185) rotate(-90) scale(0.95 1)" fill="#000080" stroke="#000080" font-size="8.47">e</text>
<text transform="translate(576.3 193.5) rotate(-90) scale(0.95 1)" fill="#000080" stroke="#000080" font-size="9.94">a</text>
<text transform="translate(570.2 209) rotate(-90) scale(0.95 1)" fill="#000000" stroke="#000000" text-anchor="end" font-size="9.94">1</text>
<text transform="translate(570.2 263.5) rotate(-90) scale(0.95 1)" fill="#000000" stroke="#000000" font-size="9.94">3</text>
<text transform="translate(577 279.5) rotate(-90) scale(0.95 1)" fill="#000000" stroke="#000000" text-anchor="end" font-size="9.94">Q0</text>
<text transform="translate(587.3 193.5) rotate(-90) scale(0.95 1)" fill="#000080" stroke="#000080" font-size="9.94">b</text>
<text transform="translate(581.2 209) rotate(-90) scale(0.95 1)" fill="#000000" stroke="#000000" text-anchor="end" font-size="9.94">2</text>
<text transform="translate(581.2 263.5) rotate(-90) scale(0.95 1)" fill="#000000" stroke="#000000" font-size="9.94">4</text>
<text transform="translate(588 279.5) rotate(-90) scale(0.95 1)" fill="#000000" stroke="#000000" text-anchor="end" font-size="9.94">Q1</text>
<text transform="translate(598.3 193.5) rotate(-90) scale(0.95 1)" fill="#000080" stroke="#000080" font-size="9.94">c</text>
<text transform="translate(592.2 209) rotate(-90) scale(0.95 1)" fill="#000000" stroke="#000000" text-anchor="end" font-size="9.94">3</text>
<text transform="translate(592.2 263.5) rotate(-90) scale(0.95 1)" fill="#000000" stroke="#000000" font-size="9.94">5</text>
<text transform="translate(599 279.5) rotate(-90) scale(0.95 1)" fill="#000000" stroke="#000000" text-anchor="end" font-size="9.94">Q2</text>
<text transform="translate(609.3 193.5) rotate(-90) scale(0.95 1)" fill="#000080" stroke="#000080" font-size="9.94">d</text>
<text transform="translate(603.2 209) rotate(-90) scale(0.95 1)" fill="#000000" stroke="#000000" text-anchor="end" font-size="9.94">4</text>
<text transform="translate(603.2 263.5) rotate(-90) scale(0.95 1)" fill="#000000" stroke="#000000" font-size="9.94">6</text>
<text transform="translate(610 279.5) rotate(-90) scale(0.95 1)" fill="#000000" stroke="#000000" text-anchor="end" font-size="9.94">Q3</text>
<text transform="translate(620.3 193.5) rotate(-90) scale(0.95 1)" fill="#000080" stroke="#000080" font-size="8.47">e</text>
<text transform="translate(614.2 209) rotate(-90) scale(0.95 1)" fill="#000000" stroke="#000000" text-anchor="end" font-size="9.94">5</text>
<text transform="translate(614.2 263.5) rotate(-90) scale(0.95 1)" fill="#000000" stroke="#000000" font-size="9.94">10</text>
<text transform="translate(621 279.5) rotate(-90) scale(0.95 1)" fill="#000000" stroke="#000000" text-anchor="end" font-size="9.94">Q4</text>
<text transform="translate(631.3 193.5) rotate(-90) scale(0.95 1)" fill="#000080" stroke="#000080" font-size="9.94">f</text>
<text transform="translate(625.2 209) rotate(-90) scale(0.95 1)" fill="#000000" stroke="#000000" text-anchor="end" font-size="9.94">6</text>
<text transform="translate(625.2 263.5) rotate(-90) scale(0.95 1)" fill="#000000" stroke="#000000" font-size="9.94">11</text>
<text transform="translate(632 279.5) rotate(-90) scale(0.95 1)" fill="#000000" stroke="#000000" text-anchor="end" font-size="9.94">Q5</text>
<text transform="translate(642.3 193.5) rotate(-90) scale(0.95 1)" fill="#000080" stroke="#000080" font-size="9.94">g</text>
<text transform="translate(636.2 209) rotate(-90) scale(0.95 1)" fill="#000000" stroke="#000000" text-anchor="end" font-size="9.94">7</text>
<text transform="translate(636.2 263.5) rotate(-90) scale(0.95 1)" fill="#000000" stroke="#000000" font-size="9.94">12</text>
<text transform="translate(643 279.5) rotate(-90) scale(0.95 1)" fill="#000000" stroke="#000000" text-anchor="end" font-size="9.94">Q6</text>
<text transform="translate(652.5 193.5) rotate(-90) scale(0.95 1)" fill="#000080" stroke="#000080" font-size="9.94">dp</text>
<text transform="translate(647.2 209) rotate(-90) scale(0.95 1)" fill="#000000" stroke="#000000" text-anchor="end" font-size="9.94">8</text>
<text transform="translate(647.2 263.5) rotate(-90) scale(0.95 1)" fill="#000000" stroke="#000000" font-size="9.94">13</text>
<text transform="translate(654 279.5) rotate(-90) scale(0.95 1)" fill="#000000" stroke="#000000" text-anchor="end" font-size="9.94">Q7</text>
<text transform="translate(661.5 281) scale(0.9 1)" fill="#000080" stroke="#000080">U4</text>
<text transform="translate(661.5 292) scale(0.9 1)" fill="#000080" stroke="#000080">74LS164</text>
<text transform="translate(570.2 335.8) rotate(-90) scale(0.95 1)" fill="#000000" stroke="#000000" text-anchor="end" font-size="9.94">1</text>
<text transform="translate(577 318.5) rotate(-90) scale(0.95 1)" fill="#000000" stroke="#000000" font-size="9.94">A</text>
<text transform="translate(581.2 335.8) rotate(-90) scale(0.95 1)" fill="#000000" stroke="#000000" text-anchor="end" font-size="9.94">2</text>
<text transform="translate(588 318.5) rotate(-90) scale(0.95 1)" fill="#000000" stroke="#000000" font-size="9.94">B</text>
<text transform="translate(636.2 335.8) rotate(-90) scale(0.95 1)" fill="#000000" stroke="#000000" text-anchor="end" font-size="9.94">8</text>
<text transform="translate(643 318.5) rotate(-90) scale(0.95 1)" fill="#000000" stroke="#000000" font-size="9.94">CLK</text>
<text transform="translate(647.2 335.8) rotate(-90) scale(0.95 1)" fill="#000000" stroke="#000000" text-anchor="end" font-size="9.94">9</text>
<text transform="translate(654 318.5) rotate(-90) scale(0.95 1)" fill="#000000" stroke="#000000" font-size="9.94">MR</text>
<text transform="translate(636.7 369.3) rotate(-90) scale(0.95 1)" fill="#800000" stroke="#800000" font-size="9.94">CLK</text>
<text transform="translate(726 170.8) scale(0.9 1)" fill="#000080" stroke="#000080">CON1</text>
<text transform="translate(726 214.5) scale(0.9 1)" fill="#000080" stroke="#000080">CON 1x2</text>
<text transform="translate(738.7 186.7) scale(0.9 1)" fill="#000000" stroke="#000000" text-anchor="middle">2</text>
<text transform="translate(738.7 197.7) scale(0.9 1)" fill="#000000" stroke="#000000" text-anchor="middle">1</text>
<text transform="translate(710.5 160)" fill="#000080" font-size="7.8" font-family='"Liberation Sans", "Noto Sans CJK SC", sans-serif'>红外传感器</text>
<text transform="translate(780.5 182) scale(0.9 1)" fill="#800000" stroke="#800000">Vi</text>
<text transform="translate(776.5 225.2) scale(0.9 1)" fill="#800000" stroke="#800000" text-anchor="middle">GND</text>
<text transform="translate(838 160) scale(0.9 1)" fill="#000000" stroke="#000000" text-anchor="end">2</text>
<text transform="translate(838 182) scale(0.9 1)" fill="#000000" stroke="#000000" text-anchor="end">3</text>
<text transform="translate(900.5 171) scale(0.9 1)" fill="#000000" stroke="#000000">1</text>
<text transform="translate(874.5 160) scale(0.9 1)" fill="#000080" stroke="#000080">U5A</text>
<text transform="translate(874.5 198) scale(0.9 1)" fill="#000080" stroke="#000080">LM358</text>
<text transform="translate(869.5 247.2) scale(0.9 1)" fill="#800000" stroke="#800000" text-anchor="middle">GND</text>
<text transform="translate(866.2 142.5) rotate(-90) scale(0.95 1)" fill="#000000" stroke="#000000" font-size="9.94">8</text>
<text transform="translate(866.2 205.5) rotate(-90) scale(0.95 1)" fill="#000000" stroke="#000000" text-anchor="end" font-size="9.94">4</text>
<text transform="translate(856 132.5) scale(0.9 1)" fill="#800000" stroke="#800000" text-anchor="end">VCC</text>
<text transform="translate(926 132) scale(0.9 1)" fill="#800000" stroke="#800000">GND</text>
<text transform="translate(879 117) scale(0.9 1)" fill="#000080" stroke="#000080">C1</text>
<text transform="translate(891.5 126.5) scale(0.9 1)" fill="#000080" stroke="#000080">104</text>
<text transform="translate(972 167) scale(0.9 1)" fill="#000080" stroke="#000080">R7</text>
<text transform="translate(972 186.5) scale(0.9 1)" fill="#000080" stroke="#000080">202</text>
<text transform="translate(1027 167) scale(0.9 1)" fill="#000080" stroke="#000080">R8</text>
<text transform="translate(1027 186.5) scale(0.9 1)" fill="#000080" stroke="#000080">202</text>
<text transform="translate(1101 149) scale(0.9 1)" fill="#000000" stroke="#000000" text-anchor="end">6</text>
<text transform="translate(1101 171) scale(0.9 1)" fill="#000000" stroke="#000000" text-anchor="end">5</text>
<text transform="translate(1163.5 160) scale(0.9 1)" fill="#000000" stroke="#000000">7</text>
<text transform="translate(1137 149.5) scale(0.9 1)" fill="#000080" stroke="#000080">U5B</text>
<text transform="translate(1108.5 194) scale(0.9 1)" fill="#000080" stroke="#000080">LM358</text>
<text transform="translate(1015 116.5) scale(0.9 1)" fill="#800000" stroke="#800000" text-anchor="end">GND</text>
<text transform="translate(1049 107) scale(0.9 1)" fill="#000080" stroke="#000080">R1</text>
<text transform="translate(1049 126.5) scale(0.9 1)" fill="#000080" stroke="#000080">104</text>
<text transform="translate(1120 107) scale(0.9 1)" fill="#000080" stroke="#000080">R2</text>
<text transform="translate(1120 126.5) scale(0.9 1)" fill="#000080" stroke="#000080">104</text>
<text transform="translate(1198.5 160) scale(0.9 1)" fill="#800000" stroke="#800000">Vo</text>
<text transform="translate(1061.5 241.2) scale(0.9 1)" fill="#800000" stroke="#800000" text-anchor="middle">GND</text>
<text transform="translate(1071 197.5) scale(0.9 1)" fill="#000080" stroke="#000080">C4</text>
<text transform="translate(1071 208.5) scale(0.9 1)" fill="#000080" stroke="#000080">105</text>
<text transform="translate(1102.5 238.5) scale(0.9 1)" fill="#000080" stroke="#000080">C5</text>
<text transform="translate(1102.5 269.5) scale(0.9 1)" fill="#000080" stroke="#000080">205</text>
<text transform="translate(869 274.8) scale(0.9 1)" fill="#000080" stroke="#000080">U6</text>
<text transform="translate(863 373.5) scale(0.9 1)" fill="#000080" stroke="#000080">74LS74</text>
<text transform="translate(859.5 286) scale(0.9 1)" fill="#000000" stroke="#000000" text-anchor="end">1</text>
<text transform="translate(876.5 291.7) scale(0.9 1)" fill="#000000" stroke="#000000">CLR1</text>
<text transform="translate(859.5 297) scale(0.9 1)" fill="#000000" stroke="#000000" text-anchor="end">2</text>
<text transform="translate(876.5 302.7) scale(0.9 1)" fill="#000000" stroke="#000000">D1</text>
<text transform="translate(859.5 308) scale(0.9 1)" fill="#000000" stroke="#000000" text-anchor="end">3</text>
<text transform="translate(876.5 313.7) scale(0.9 1)" fill="#000000" stroke="#000000">CLK1</text>
<text transform="translate(859.5 319) scale(0.9 1)" fill="#000000" stroke="#000000" text-anchor="end">4</text>
<text transform="translate(876.5 324.7) scale(0.9 1)" fill="#000000" stroke="#000000">PR1</text>
<text transform="translate(859.5 330) scale(0.9 1)" fill="#000000" stroke="#000000" text-anchor="end">5</text>
<text transform="translate(876.5 335.7) scale(0.9 1)" fill="#000000" stroke="#000000">Q1</text>
<text transform="translate(859.5 341) scale(0.9 1)" fill="#000000" stroke="#000000" text-anchor="end">6</text>
<text transform="translate(876.5 346.7) scale(0.9 1)" fill="#000000" stroke="#000000">Q</text>
<text transform="translate(859.5 352) scale(0.9 1)" fill="#000000" stroke="#000000" text-anchor="end">7</text>
<text transform="translate(876.5 357.7) scale(0.9 1)" fill="#000000" stroke="#000000">GND</text>
<text transform="translate(943.5 286) scale(0.9 1)" fill="#000000" stroke="#000000">14</text>
<text transform="translate(926.8 291.7) scale(0.9 1)" fill="#000000" stroke="#000000" text-anchor="end">VCC</text>
<text transform="translate(943.5 297) scale(0.9 1)" fill="#000000" stroke="#000000">13</text>
<text transform="translate(926.8 302.7) scale(0.9 1)" fill="#000000" stroke="#000000" text-anchor="end">CLR2</text>
<text transform="translate(943.5 308) scale(0.9 1)" fill="#000000" stroke="#000000">12</text>
<text transform="translate(926.8 313.7) scale(0.9 1)" fill="#000000" stroke="#000000" text-anchor="end">D2</text>
<text transform="translate(943.5 319) scale(0.9 1)" fill="#000000" stroke="#000000">11</text>
<text transform="translate(926.8 324.7) scale(0.9 1)" fill="#000000" stroke="#000000" text-anchor="end">CLK2</text>
<text transform="translate(943.5 330) scale(0.9 1)" fill="#000000" stroke="#000000">10</text>
<text transform="translate(926.8 335.7) scale(0.9 1)" fill="#000000" stroke="#000000" text-anchor="end">PR2</text>
<text transform="translate(943.5 341) scale(0.9 1)" fill="#000000" stroke="#000000">9</text>
<text transform="translate(926.8 346.7) scale(0.9 1)" fill="#000000" stroke="#000000" text-anchor="end">Q2</text>
<text transform="translate(943.5 352) scale(0.9 1)" fill="#000000" stroke="#000000">8</text>
<text transform="translate(926.8 357.7) scale(0.9 1)" fill="#000000" stroke="#000000" text-anchor="end">Q2</text>
<text transform="translate(814.5 248) scale(0.9 1)" fill="#800000" stroke="#800000" text-anchor="middle">VCC</text>
<text transform="translate(836.5 384.2) scale(0.9 1)" fill="#800000" stroke="#800000" text-anchor="middle">GND</text>
<text transform="translate(546 384.8) scale(0.9 1)" fill="#000080" stroke="#000080">U7</text>
<text transform="translate(546 625.5) scale(0.9 1)" fill="#000080" stroke="#000080">AT89C51</text>
<text transform="translate(536.5 396) scale(0.9 1)" fill="#000000" stroke="#000000" text-anchor="end">1</text>
<text transform="translate(553.5 401.7) scale(0.9 1)" fill="#000000" stroke="#000000">P1.0</text>
<text transform="translate(536.5 407) scale(0.9 1)" fill="#000000" stroke="#000000" text-anchor="end">2</text>
<text transform="translate(553.5 412.7) scale(0.9 1)" fill="#000000" stroke="#000000">P1.1</text>
<text transform="translate(536.5 418) scale(0.9 1)" fill="#000000" stroke="#000000" text-anchor="end">3</text>
<text transform="translate(553.5 423.7) scale(0.9 1)" fill="#000000" stroke="#000000">P1.2</text>
<text transform="translate(536.5 429) scale(0.9 1)" fill="#000000" stroke="#000000" text-anchor="end">4</text>
<text transform="translate(553.5 434.7) scale(0.9 1)" fill="#000000" stroke="#000000">P1.3</text>
<text transform="translate(536.5 440) scale(0.9 1)" fill="#000000" stroke="#000000" text-anchor="end">5</text>
<text transform="translate(553.5 445.7) scale(0.9 1)" fill="#000000" stroke="#000000">P1.4</text>
<text transform="translate(536.5 451) scale(0.9 1)" fill="#000000" stroke="#000000" text-anchor="end">6</text>
<text transform="translate(553.5 456.7) scale(0.9 1)" fill="#000000" stroke="#000000">P1.5</text>
<text transform="translate(536.5 462) scale(0.9 1)" fill="#000000" stroke="#000000" text-anchor="end">7</text>
<text transform="translate(553.5 467.7) scale(0.9 1)" fill="#000000" stroke="#000000">P1.6</text>
<text transform="translate(536.5 472) scale(0.9 1)" fill="#000000" stroke="#000000" text-anchor="end">8</text>
<text transform="translate(553.5 477.7) scale(0.9 1)" fill="#000000" stroke="#000000">P1.7</text>
<text transform="translate(536.5 483) scale(0.9 1)" fill="#000000" stroke="#000000" text-anchor="end">9</text>
<text transform="translate(553.5 488.7) scale(0.9 1)" fill="#000000" stroke="#000000">RESET</text>
<text transform="translate(536.5 494) scale(0.9 1)" fill="#000000" stroke="#000000" text-anchor="end">10</text>
<text transform="translate(553.5 499.7) scale(0.9 1)" fill="#000000" stroke="#000000">RXD</text>
<text transform="translate(536.5 505) scale(0.9 1)" fill="#000000" stroke="#000000" text-anchor="end">11</text>
<text transform="translate(553.5 510.7) scale(0.9 1)" fill="#000000" stroke="#000000">TXD</text>
<text transform="translate(536.5 516) scale(0.9 1)" fill="#000000" stroke="#000000" text-anchor="end">12</text>
<text transform="translate(553.5 521.7) scale(0.9 1)" fill="#000000" stroke="#000000">INT0</text>
<text transform="translate(536.5 527) scale(0.9 1)" fill="#000000" stroke="#000000" text-anchor="end">13</text>
<text transform="translate(553.5 532.7) scale(0.9 1)" fill="#000000" stroke="#000000">INT1</text>
<text transform="translate(536.5 538) scale(0.9 1)" fill="#000000" stroke="#000000" text-anchor="end">14</text>
<text transform="translate(553.5 543.7) scale(0.9 1)" fill="#000000" stroke="#000000">T0</text>
<text transform="translate(536.5 549) scale(0.9 1)" fill="#000000" stroke="#000000" text-anchor="end">15</text>
<text transform="translate(553.5 554.7) scale(0.9 1)" fill="#000000" stroke="#000000">T1</text>
<text transform="translate(536.5 560) scale(0.9 1)" fill="#000000" stroke="#000000" text-anchor="end">16</text>
<text transform="translate(553.5 565.7) scale(0.9 1)" fill="#000000" stroke="#000000">WR</text>
<text transform="translate(536.5 571) scale(0.9 1)" fill="#000000" stroke="#000000" text-anchor="end">17</text>
<text transform="translate(553.5 576.7) scale(0.9 1)" fill="#000000" stroke="#000000">RD</text>
<text transform="translate(536.5 582) scale(0.9 1)" fill="#000000" stroke="#000000" text-anchor="end">18</text>
<text transform="translate(553.5 587.7) scale(0.9 1)" fill="#000000" stroke="#000000">X2</text>
<text transform="translate(536.5 593) scale(0.9 1)" fill="#000000" stroke="#000000" text-anchor="end">19</text>
<text transform="translate(553.5 598.7) scale(0.9 1)" fill="#000000" stroke="#000000">X1</text>
<text transform="translate(536.5 604) scale(0.9 1)" fill="#000000" stroke="#000000" text-anchor="end">20</text>
<text transform="translate(553.5 609.7) scale(0.9 1)" fill="#000000" stroke="#000000">GND</text>
<text transform="translate(685.5 396) scale(0.9 1)" fill="#000000" stroke="#000000">40</text>
<text transform="translate(668.8 401.7) scale(0.9 1)" fill="#000000" stroke="#000000" text-anchor="end">VCC</text>
<text transform="translate(685.5 407) scale(0.9 1)" fill="#000000" stroke="#000000">39</text>
<text transform="translate(668.8 412.7) scale(0.9 1)" fill="#000000" stroke="#000000" text-anchor="end">P0.0</text>
<text transform="translate(685.5 418) scale(0.9 1)" fill="#000000" stroke="#000000">38</text>
<text transform="translate(668.8 423.7) scale(0.9 1)" fill="#000000" stroke="#000000" text-anchor="end">P0.1</text>
<text transform="translate(685.5 429) scale(0.9 1)" fill="#000000" stroke="#000000">37</text>
<text transform="translate(668.8 434.7) scale(0.9 1)" fill="#000000" stroke="#000000" text-anchor="end">P0.2</text>
<text transform="translate(685.5 440) scale(0.9 1)" fill="#000000" stroke="#000000">36</text>
<text transform="translate(668.8 445.7) scale(0.9 1)" fill="#000000" stroke="#000000" text-anchor="end">P0.3</text>
<text transform="translate(685.5 451) scale(0.9 1)" fill="#000000" stroke="#000000">35</text>
<text transform="translate(668.8 456.7) scale(0.9 1)" fill="#000000" stroke="#000000" text-anchor="end">P0.4</text>
<text transform="translate(685.5 462) scale(0.9 1)" fill="#000000" stroke="#000000">34</text>
<text transform="translate(668.8 467.7) scale(0.9 1)" fill="#000000" stroke="#000000" text-anchor="end">P0.5</text>
<text transform="translate(685.5 472) scale(0.9 1)" fill="#000000" stroke="#000000">33</text>
<text transform="translate(668.8 477.7) scale(0.9 1)" fill="#000000" stroke="#000000" text-anchor="end">P0.6</text>
<text transform="translate(685.5 483) scale(0.9 1)" fill="#000000" stroke="#000000">32</text>
<text transform="translate(668.8 488.7) scale(0.9 1)" fill="#000000" stroke="#000000" text-anchor="end">P0.7</text>
<text transform="translate(685.5 494) scale(0.9 1)" fill="#000000" stroke="#000000">31</text>
<text transform="translate(668.8 499.7) scale(0.9 1)" fill="#000000" stroke="#000000" text-anchor="end">EA/VP</text>
<text transform="translate(685.5 505) scale(0.9 1)" fill="#000000" stroke="#000000">30</text>
<text transform="translate(668.8 510.7) scale(0.9 1)" fill="#000000" stroke="#000000" text-anchor="end">ALE/P</text>
<text transform="translate(685.5 516) scale(0.9 1)" fill="#000000" stroke="#000000">29</text>
<text transform="translate(668.8 521.7) scale(0.9 1)" fill="#000000" stroke="#000000" text-anchor="end">PSEN</text>
<text transform="translate(685.5 527) scale(0.9 1)" fill="#000000" stroke="#000000">28</text>
<text transform="translate(668.8 532.7) scale(0.9 1)" fill="#000000" stroke="#000000" text-anchor="end">P2.7</text>
<text transform="translate(685.5 538) scale(0.9 1)" fill="#000000" stroke="#000000">27</text>
<text transform="translate(668.8 543.7) scale(0.9 1)" fill="#000000" stroke="#000000" text-anchor="end">P2.6</text>
<text transform="translate(685.5 549) scale(0.9 1)" fill="#000000" stroke="#000000">26</text>
<text transform="translate(668.8 554.7) scale(0.9 1)" fill="#000000" stroke="#000000" text-anchor="end">P2.5</text>
<text transform="translate(685.5 560) scale(0.9 1)" fill="#000000" stroke="#000000">25</text>
<text transform="translate(668.8 565.7) scale(0.9 1)" fill="#000000" stroke="#000000" text-anchor="end">P2.4</text>
<text transform="translate(685.5 571) scale(0.9 1)" fill="#000000" stroke="#000000">24</text>
<text transform="translate(668.8 576.7) scale(0.9 1)" fill="#000000" stroke="#000000" text-anchor="end">P2.3</text>
<text transform="translate(685.5 582) scale(0.9 1)" fill="#000000" stroke="#000000">23</text>
<text transform="translate(668.8 587.7) scale(0.9 1)" fill="#000000" stroke="#000000" text-anchor="end">P2.2</text>
<text transform="translate(685.5 593) scale(0.9 1)" fill="#000000" stroke="#000000">22</text>
<text transform="translate(668.8 598.7) scale(0.9 1)" fill="#000000" stroke="#000000" text-anchor="end">P2.1</text>
<text transform="translate(685.5 604) scale(0.9 1)" fill="#000000" stroke="#000000">21</text>
<text transform="translate(668.8 609.7) scale(0.9 1)" fill="#000000" stroke="#000000" text-anchor="end">P2.0</text>
<text transform="translate(473.5 396) scale(0.9 1)" fill="#800000" stroke="#800000">DOWN</text>
<text transform="translate(473.5 407) scale(0.9 1)" fill="#800000" stroke="#800000">UP</text>
<text transform="translate(473.5 418) scale(0.9 1)" fill="#800000" stroke="#800000">P1.2</text>
<text transform="translate(468.5 483) scale(0.9 1)" fill="#800000" stroke="#800000">RESET</text>
<text transform="translate(468.5 494) scale(0.9 1)" fill="#800000" stroke="#800000">DIN</text>
<text transform="translate(468.5 505) scale(0.9 1)" fill="#800000" stroke="#800000">CLK</text>
<text transform="translate(513.5 636.2) scale(0.9 1)" fill="#800000" stroke="#800000" text-anchor="middle">GND</text>
<text transform="translate(710 407) scale(0.9 1)" fill="#800000" stroke="#800000">D0</text>
<text transform="translate(710 418) scale(0.9 1)" fill="#800000" stroke="#800000">D1</text>
<text transform="translate(710 429) scale(0.9 1)" fill="#800000" stroke="#800000">D2</text>
<text transform="translate(710 440) scale(0.9 1)" fill="#800000" stroke="#800000">D3</text>
<text transform="translate(710 451) scale(0.9 1)" fill="#800000" stroke="#800000">D4</text>
<text transform="translate(710 462) scale(0.9 1)" fill="#800000" stroke="#800000">D5</text>
<text transform="translate(710 472) scale(0.9 1)" fill="#800000" stroke="#800000">D6</text>
<text transform="translate(710 483) scale(0.9 1)" fill="#800000" stroke="#800000">D7</text>
<text transform="translate(734.5 499.5) scale(0.9 1)" fill="#800000" stroke="#800000">VCC</text>
<text transform="translate(831 395.8) scale(0.9 1)" fill="#000080" stroke="#000080">U9</text>
<text transform="translate(831 537.5) scale(0.9 1)" fill="#000080" stroke="#000080">74LS373</text>
<text transform="translate(821.5 407) scale(0.9 1)" fill="#000000" stroke="#000000" text-anchor="end">3</text>
<text transform="translate(838.5 412.7) scale(0.9 1)" fill="#000000" stroke="#000000">D0</text>
<text transform="translate(821.5 418) scale(0.9 1)" fill="#000000" stroke="#000000" text-anchor="end">4</text>
<text transform="translate(838.5 423.7) scale(0.9 1)" fill="#000000" stroke="#000000">D1</text>
<text transform="translate(821.5 429) scale(0.9 1)" fill="#000000" stroke="#000000" text-anchor="end">7</text>
<text transform="translate(838.5 434.7) scale(0.9 1)" fill="#000000" stroke="#000000">D2</text>
<text transform="translate(821.5 440) scale(0.9 1)" fill="#000000" stroke="#000000" text-anchor="end">8</text>
<text transform="translate(838.5 445.7) scale(0.9 1)" fill="#000000" stroke="#000000">D3</text>
<text transform="translate(821.5 451) scale(0.9 1)" fill="#000000" stroke="#000000" text-anchor="end">13</text>
<text transform="translate(838.5 456.7) scale(0.9 1)" fill="#000000" stroke="#000000">D4</text>
<text transform="translate(821.5 462) scale(0.9 1)" fill="#000000" stroke="#000000" text-anchor="end">14</text>
<text transform="translate(838.5 467.7) scale(0.9 1)" fill="#000000" stroke="#000000">D5</text>
<text transform="translate(821.5 472) scale(0.9 1)" fill="#000000" stroke="#000000" text-anchor="end">17</text>
<text transform="translate(838.5 477.7) scale(0.9 1)" fill="#000000" stroke="#000000">D6</text>
<text transform="translate(821.5 483) scale(0.9 1)" fill="#000000" stroke="#000000" text-anchor="end">18</text>
<text transform="translate(838.5 488.7) scale(0.9 1)" fill="#000000" stroke="#000000">D7</text>
<text transform="translate(821.5 505) scale(0.9 1)" fill="#000000" stroke="#000000" text-anchor="end">1</text>
<text transform="translate(838.5 510.7) scale(0.9 1)" fill="#000000" stroke="#000000">CE</text>
<text transform="translate(821.5 516) scale(0.9 1)" fill="#000000" stroke="#000000" text-anchor="end">11</text>
<text transform="translate(838.5 521.7) scale(0.9 1)" fill="#000000" stroke="#000000">LE</text>
<text transform="translate(904.5 407) scale(0.9 1)" fill="#000000" stroke="#000000">2</text>
<text transform="translate(887.8 412.7) scale(0.9 1)" fill="#000000" stroke="#000000" text-anchor="end">O0</text>
<text transform="translate(904.5 418) scale(0.9 1)" fill="#000000" stroke="#000000">5</text>
<text transform="translate(887.8 423.7) scale(0.9 1)" fill="#000000" stroke="#000000" text-anchor="end">O1</text>
<text transform="translate(904.5 429) scale(0.9 1)" fill="#000000" stroke="#000000">6</text>
<text transform="translate(887.8 434.7) scale(0.9 1)" fill="#000000" stroke="#000000" text-anchor="end">O2</text>
<text transform="translate(904.5 440) scale(0.9 1)" fill="#000000" stroke="#000000">9</text>
<text transform="translate(887.8 445.7) scale(0.9 1)" fill="#000000" stroke="#000000" text-anchor="end">O3</text>
<text transform="translate(904.5 451) scale(0.9 1)" fill="#000000" stroke="#000000">12</text>
<text transform="translate(887.8 456.7) scale(0.9 1)" fill="#000000" stroke="#000000" text-anchor="end">O4</text>
<text transform="translate(904.5 462) scale(0.9 1)" fill="#000000" stroke="#000000">15</text>
<text transform="translate(887.8 467.7) scale(0.9 1)" fill="#000000" stroke="#000000" text-anchor="end">O5</text>
<text transform="translate(904.5 472) scale(0.9 1)" fill="#000000" stroke="#000000">16</text>
<text transform="translate(887.8 477.7) scale(0.9 1)" fill="#000000" stroke="#000000" text-anchor="end">O6</text>
<text transform="translate(904.5 483) scale(0.9 1)" fill="#000000" stroke="#000000">19</text>
<text transform="translate(887.8 488.7) scale(0.9 1)" fill="#000000" stroke="#000000" text-anchor="end">O7</text>
<text transform="translate(904.5 505) scale(0.9 1)" fill="#000000" stroke="#000000">20</text>
<text transform="translate(887.8 510.7) scale(0.9 1)" fill="#000000" stroke="#000000" text-anchor="end">VCC</text>
<text transform="translate(904.5 516) scale(0.9 1)" fill="#000000" stroke="#000000">10</text>
<text transform="translate(887.8 521.7) scale(0.9 1)" fill="#000000" stroke="#000000" text-anchor="end">GND</text>
<text transform="translate(787 407) scale(0.9 1)" fill="#800000" stroke="#800000">D0</text>
<text transform="translate(787 418) scale(0.9 1)" fill="#800000" stroke="#800000">D1</text>
<text transform="translate(787 429) scale(0.9 1)" fill="#800000" stroke="#800000">D2</text>
<text transform="translate(787 440) scale(0.9 1)" fill="#800000" stroke="#800000">D3</text>
<text transform="translate(787 451) scale(0.9 1)" fill="#800000" stroke="#800000">D4</text>
<text transform="translate(787 462) scale(0.9 1)" fill="#800000" stroke="#800000">D5</text>
<text transform="translate(787 472) scale(0.9 1)" fill="#800000" stroke="#800000">D6</text>
<text transform="translate(787 483) scale(0.9 1)" fill="#800000" stroke="#800000">D7</text>
<text transform="translate(940.5 494) scale(0.9 1)" fill="#800000" stroke="#800000" text-anchor="middle">VCC</text>
<text transform="translate(929.5 570.2) scale(0.9 1)" fill="#800000" stroke="#800000" text-anchor="middle">GND</text>
<text transform="translate(1050 384.8) scale(0.9 1)" fill="#000080" stroke="#000080">U8</text>
<text transform="translate(1050 592.5) scale(0.9 1)" fill="#000080" stroke="#000080">ADC0809</text>
<text transform="translate(1040.5 396) scale(0.9 1)" fill="#000000" stroke="#000000" text-anchor="end">10</text>
<text transform="translate(1057.5 401.7) scale(0.9 1)" fill="#000000" stroke="#000000">CLK</text>
<text transform="translate(1040.5 407) scale(0.9 1)" fill="#000000" stroke="#000000" text-anchor="end">6</text>
<text transform="translate(1057.5 412.7) scale(0.9 1)" fill="#000000" stroke="#000000">ST</text>
<text transform="translate(1040.5 418) scale(0.9 1)" fill="#000000" stroke="#000000" text-anchor="end">9</text>
<text transform="translate(1057.5 423.7) scale(0.9 1)" fill="#000000" stroke="#000000">OE</text>
<text transform="translate(1040.5 429) scale(0.9 1)" fill="#000000" stroke="#000000" text-anchor="end">22</text>
<text transform="translate(1057.5 434.7) scale(0.9 1)" fill="#000000" stroke="#000000">ALE</text>
<text transform="translate(1040.5 440) scale(0.9 1)" fill="#000000" stroke="#000000" text-anchor="end">23</text>
<text transform="translate(1057.5 445.7) scale(0.9 1)" fill="#000000" stroke="#000000">C</text>
<text transform="translate(1040.5 451) scale(0.9 1)" fill="#000000" stroke="#000000" text-anchor="end">24</text>
<text transform="translate(1057.5 456.7) scale(0.9 1)" fill="#000000" stroke="#000000">B</text>
<text transform="translate(1040.5 462) scale(0.9 1)" fill="#000000" stroke="#000000" text-anchor="end">25</text>
<text transform="translate(1057.5 467.7) scale(0.9 1)" fill="#000000" stroke="#000000">A</text>
<text transform="translate(1040.5 472) scale(0.9 1)" fill="#000000" stroke="#000000" text-anchor="end">7</text>
<text transform="translate(1057.5 477.7) scale(0.9 1)" fill="#000000" stroke="#000000">EOC</text>
<text transform="translate(1040.5 494) scale(0.9 1)" fill="#000000" stroke="#000000" text-anchor="end">17</text>
<text transform="translate(1057.5 499.7) scale(0.9 1)" fill="#000000" stroke="#000000">D0</text>
<text transform="translate(1040.5 505) scale(0.9 1)" fill="#000000" stroke="#000000" text-anchor="end">14</text>
<text transform="translate(1057.5 510.7) scale(0.9 1)" fill="#000000" stroke="#000000">D1</text>
<text transform="translate(1040.5 516) scale(0.9 1)" fill="#000000" stroke="#000000" text-anchor="end">15</text>
<text transform="translate(1057.5 521.7) scale(0.9 1)" fill="#000000" stroke="#000000">D2</text>
<text transform="translate(1040.5 527) scale(0.9 1)" fill="#000000" stroke="#000000" text-anchor="end">8</text>
<text transform="translate(1057.5 532.7) scale(0.9 1)" fill="#000000" stroke="#000000">D3</text>
<text transform="translate(1040.5 538) scale(0.9 1)" fill="#000000" stroke="#000000" text-anchor="end">18</text>
<text transform="translate(1057.5 543.7) scale(0.9 1)" fill="#000000" stroke="#000000">D4</text>
<text transform="translate(1040.5 549) scale(0.9 1)" fill="#000000" stroke="#000000" text-anchor="end">19</text>
<text transform="translate(1057.5 554.7) scale(0.9 1)" fill="#000000" stroke="#000000">D5</text>
<text transform="translate(1040.5 560) scale(0.9 1)" fill="#000000" stroke="#000000" text-anchor="end">20</text>
<text transform="translate(1057.5 565.7) scale(0.9 1)" fill="#000000" stroke="#000000">D6</text>
<text transform="translate(1040.5 571) scale(0.9 1)" fill="#000000" stroke="#000000" text-anchor="end">21</text>
<text transform="translate(1057.5 576.7) scale(0.9 1)" fill="#000000" stroke="#000000">D7</text>
<text transform="translate(1134.5 396) scale(0.9 1)" fill="#000000" stroke="#000000">11</text>
<text transform="translate(1117.8 401.7) scale(0.9 1)" fill="#000000" stroke="#000000" text-anchor="end">VCC</text>
<text transform="translate(1134.5 407) scale(0.9 1)" fill="#000000" stroke="#000000">13</text>
<text transform="translate(1117.8 412.7) scale(0.9 1)" fill="#000000" stroke="#000000" text-anchor="end">GND</text>
<text transform="translate(1134.5 451) scale(0.9 1)" fill="#000000" stroke="#000000">12</text>
<text transform="translate(1117.8 456.7) scale(0.9 1)" fill="#000000" stroke="#000000" text-anchor="end">VREF+</text>
<text transform="translate(1134.5 462) scale(0.9 1)" fill="#000000" stroke="#000000">16</text>
<text transform="translate(1117.8 467.7) scale(0.9 1)" fill="#000000" stroke="#000000" text-anchor="end">VREF-</text>
<text transform="translate(1134.5 494) scale(0.9 1)" fill="#000000" stroke="#000000">5</text>
<text transform="translate(1117.8 499.7) scale(0.9 1)" fill="#000000" stroke="#000000" text-anchor="end">IN7</text>
<text transform="translate(1134.5 505) scale(0.9 1)" fill="#000000" stroke="#000000">4</text>
<text transform="translate(1117.8 510.7) scale(0.9 1)" fill="#000000" stroke="#000000" text-anchor="end">IN6</text>
<text transform="translate(1134.5 516) scale(0.9 1)" fill="#000000" stroke="#000000">3</text>
<text transform="translate(1117.8 521.7) scale(0.9 1)" fill="#000000" stroke="#000000" text-anchor="end">IN5</text>
<text transform="translate(1134.5 527) scale(0.9 1)" fill="#000000" stroke="#000000">2</text>
<text transform="translate(1117.8 532.7) scale(0.9 1)" fill="#000000" stroke="#000000" text-anchor="end">IN4</text>
<text transform="translate(1134.5 538) scale(0.9 1)" fill="#000000" stroke="#000000">1</text>
<text transform="translate(1117.8 543.7) scale(0.9 1)" fill="#000000" stroke="#000000" text-anchor="end">IN3</text>
<text transform="translate(1134.5 549) scale(0.9 1)" fill="#000000" stroke="#000000">28</text>
<text transform="translate(1117.8 554.7) scale(0.9 1)" fill="#000000" stroke="#000000" text-anchor="end">IN2</text>
<text transform="translate(1134.5 560) scale(0.9 1)" fill="#000000" stroke="#000000">27</text>
<text transform="translate(1117.8 565.7) scale(0.9 1)" fill="#000000" stroke="#000000" text-anchor="end">IN1</text>
<text transform="translate(1134.5 571) scale(0.9 1)" fill="#000000" stroke="#000000">26</text>
<text transform="translate(1117.8 576.7) scale(0.9 1)" fill="#000000" stroke="#000000" text-anchor="end">IN0</text>
<text transform="translate(1006 494) scale(0.9 1)" fill="#800000" stroke="#800000">D0</text>
<text transform="translate(1006 505) scale(0.9 1)" fill="#800000" stroke="#800000">D1</text>
<text transform="translate(1006 516) scale(0.9 1)" fill="#800000" stroke="#800000">D2</text>
<text transform="translate(1006 527) scale(0.9 1)" fill="#800000" stroke="#800000">D3</text>
<text transform="translate(1006 538) scale(0.9 1)" fill="#800000" stroke="#800000">D4</text>
<text transform="translate(1006 549) scale(0.9 1)" fill="#800000" stroke="#800000">D5</text>
<text transform="translate(1006 560) scale(0.9 1)" fill="#800000" stroke="#800000">D6</text>
<text transform="translate(1006 571) scale(0.9 1)" fill="#800000" stroke="#800000">D7</text>
<text transform="translate(1176.5 571) scale(0.9 1)" fill="#800000" stroke="#800000">Vo</text>
<text transform="translate(1194.5 400.7) scale(0.9 1)" fill="#800000" stroke="#800000">VCC</text>
<text transform="translate(1205 412) scale(0.9 1)" fill="#800000" stroke="#800000">GND</text>
<text transform="translate(841 641.8) scale(0.9 1)" fill="#000080" stroke="#000080">U10</text>
<text transform="translate(841 740.5) scale(0.9 1)" fill="#000080" stroke="#000080">74LS02</text>
<text transform="translate(831.5 653) scale(0.9 1)" fill="#000000" stroke="#000000" text-anchor="end">1</text>
<text transform="translate(848.5 658.7) scale(0.9 1)" fill="#000000" stroke="#000000">1Y</text>
<text transform="translate(831.5 664) scale(0.9 1)" fill="#000000" stroke="#000000" text-anchor="end">2</text>
<text transform="translate(848.5 669.7) scale(0.9 1)" fill="#000000" stroke="#000000">1A</text>
<text transform="translate(831.5 675) scale(0.9 1)" fill="#000000" stroke="#000000" text-anchor="end">3</text>
<text transform="translate(848.5 680.7) scale(0.9 1)" fill="#000000" stroke="#000000">1B</text>
<text transform="translate(831.5 686) scale(0.9 1)" fill="#000000" stroke="#000000" text-anchor="end">4</text>
<text transform="translate(848.5 691.7) scale(0.9 1)" fill="#000000" stroke="#000000">2Y</text>
<text transform="translate(831.5 697) scale(0.9 1)" fill="#000000" stroke="#000000" text-anchor="end">5</text>
<text transform="translate(848.5 702.7) scale(0.9 1)" fill="#000000" stroke="#000000">2A</text>
<text transform="translate(831.5 708) scale(0.9 1)" fill="#000000" stroke="#000000" text-anchor="end">6</text>
<text transform="translate(848.5 713.7) scale(0.9 1)" fill="#000000" stroke="#000000">2B</text>
<text transform="translate(831.5 719) scale(0.9 1)" fill="#000000" stroke="#000000" text-anchor="end">7</text>
<text transform="translate(848.5 724.7) scale(0.9 1)" fill="#000000" stroke="#000000">GND</text>
<text transform="translate(915.5 653) scale(0.9 1)" fill="#000000" stroke="#000000">14</text>
<text transform="translate(898.8 658.7) scale(0.9 1)" fill="#000000" stroke="#000000" text-anchor="end">VCC</text>
<text transform="translate(915.5 664) scale(0.9 1)" fill="#000000" stroke="#000000">13</text>
<text transform="translate(898.8 669.7) scale(0.9 1)" fill="#000000" stroke="#000000" text-anchor="end">4Y</text>
<text transform="translate(915.5 675) scale(0.9 1)" fill="#000000" stroke="#000000">12</text>
<text transform="translate(898.8 680.7) scale(0.9 1)" fill="#000000" stroke="#000000" text-anchor="end">4B</text>
<text transform="translate(915.5 686) scale(0.9 1)" fill="#000000" stroke="#000000">11</text>
<text transform="translate(898.8 691.7) scale(0.9 1)" fill="#000000" stroke="#000000" text-anchor="end">4A</text>
<text transform="translate(915.5 697) scale(0.9 1)" fill="#000000" stroke="#000000">10</text>
<text transform="translate(898.8 702.7) scale(0.9 1)" fill="#000000" stroke="#000000" text-anchor="end">3Y</text>
<text transform="translate(915.5 708) scale(0.9 1)" fill="#000000" stroke="#000000">9</text>
<text transform="translate(898.8 713.7) scale(0.9 1)" fill="#000000" stroke="#000000" text-anchor="end">3B</text>
<text transform="translate(915.5 719) scale(0.9 1)" fill="#000000" stroke="#000000">8</text>
<text transform="translate(898.8 724.7) scale(0.9 1)" fill="#000000" stroke="#000000" text-anchor="end">3A</text>
<text transform="translate(940.5 642) scale(0.9 1)" fill="#800000" stroke="#800000" text-anchor="middle">VCC</text>
<text transform="translate(809.5 751.2) scale(0.9 1)" fill="#800000" stroke="#800000" text-anchor="middle">GND</text>
<text transform="translate(58.5 423)" fill="#000080" font-size="7.9" font-family='"Liberation Sans", "Noto Sans CJK SC", sans-serif'>主轴电机中间继电器</text>
<text transform="translate(47 444.8) scale(0.9 1)" fill="#000080" stroke="#000080">CON2</text>
<text transform="translate(47 488.5) scale(0.9 1)" fill="#000080" stroke="#000080">CON 1x2</text>
<text transform="translate(59.7 460.7) scale(0.9 1)" fill="#000000" stroke="#000000" text-anchor="middle">2</text>
<text transform="translate(59.7 471.7) scale(0.9 1)" fill="#000000" stroke="#000000" text-anchor="middle">1</text>
<text transform="translate(162.5 412) scale(0.9 1)" fill="#800000" stroke="#800000" text-anchor="middle">VCC</text>
<text transform="translate(145.5 462) scale(0.9 1)" fill="#000080" stroke="#000080">S2</text>
<text transform="translate(166 460.5) scale(0.9 1)" fill="#000080" stroke="#000080">KM1</text>
<text transform="translate(197.2 434) rotate(-90) scale(0.95 1)" fill="#000000" stroke="#000000" text-anchor="end" font-size="9.94">2</text>
<text transform="translate(197.5 493.5) rotate(-90) scale(0.95 1)" fill="#000000" stroke="#000000" font-size="9.94">1</text>
<text transform="translate(211.5 455) scale(0.9 1)" fill="#000080" stroke="#000080">D5</text>
<text transform="translate(211.5 466) scale(0.9 1)" fill="#000080" stroke="#000080">1N4148</text>
<text transform="translate(140 521.8) scale(0.9 1)" fill="#0000ff" stroke="#0000ff" font-size="7">NPN</text>
<text transform="translate(131.7 535.8) scale(0.9 1)" fill="#0000ff" stroke="#0000ff" font-size="7">b</text>
<text transform="translate(167.3 521.5) scale(0.9 1)" fill="#0000ff" stroke="#0000ff" font-size="7">c</text>
<text transform="translate(167.3 560) scale(0.9 1)" fill="#0000ff" stroke="#0000ff" font-size="7">e</text>
<text transform="translate(170.5 525.5) scale(0.9 1)" fill="#000080" stroke="#000080">Q1</text>
<text transform="translate(170.5 536.5) scale(0.9 1)" fill="#000080" stroke="#000080">TIP29C</text>
<text transform="translate(47 538) scale(0.9 1)" fill="#800000" stroke="#800000">P1.2</text>
<text transform="translate(84 534) scale(0.9 1)" fill="#000080" stroke="#000080">R11</text>
<text transform="translate(84 553.5) scale(0.9 1)" fill="#000080" stroke="#000080">103</text>
<text transform="translate(166 603) scale(0.9 1)" fill="#000080" stroke="#000080">R12</text>
<text transform="translate(166 614) scale(0.9 1)" fill="#000080" stroke="#000080">103</text>
<text transform="translate(162.5 663.2) scale(0.9 1)" fill="#800000" stroke="#800000" text-anchor="middle">GND</text>
<text transform="translate(255.5 434) scale(0.9 1)" fill="#800000" stroke="#800000" text-anchor="middle">VCC</text>
<text transform="translate(281 441) scale(0.9 1)" fill="#000080" stroke="#000080">R9</text>
<text transform="translate(281 460.5) scale(0.9 1)" fill="#000080" stroke="#000080">103</text>
<text transform="translate(391.5 440) scale(0.9 1)" fill="#000080" stroke="#000080">S1</text>
<text transform="translate(354 461.8) scale(0.9 1)" fill="#000080" stroke="#000080">RSET</text>
<text transform="translate(323 462.7) scale(0.9 1)" fill="#000080" stroke="#000080">C6</text>
<text transform="translate(326.7 494) scale(0.9 1)" fill="#000080" stroke="#000080">10uF</text>
<text transform="translate(418 468) scale(0.9 1)" fill="#000080" stroke="#000080">R10</text>
<text transform="translate(418 487.5) scale(0.9 1)" fill="#000080" stroke="#000080">103</text>
<text transform="translate(452.5 521.2) scale(0.9 1)" fill="#800000" stroke="#800000" text-anchor="middle">GND</text>
<text transform="translate(297 570.5) scale(0.9 1)" fill="#800000" stroke="#800000" text-anchor="end">GND</text>
<text transform="translate(341.5 528) scale(0.9 1)" fill="#000080" stroke="#000080">C2</text>
<text transform="translate(341.5 559) scale(0.9 1)" fill="#000080" stroke="#000080">220</text>
<text transform="translate(341.5 583) scale(0.9 1)" fill="#000080" stroke="#000080">C3</text>
<text transform="translate(341.5 614) scale(0.9 1)" fill="#000080" stroke="#000080">200</text>
<text transform="translate(372.7 551) rotate(-90) scale(0.95 1)" fill="#000000" stroke="#000000" text-anchor="middle" font-size="9.94">2</text>
<text transform="translate(372.7 584.5) rotate(-90) scale(0.95 1)" fill="#000000" stroke="#000000" text-anchor="middle" font-size="9.94">1</text>
<text transform="translate(387 559.5) scale(0.9 1)" fill="#000080" stroke="#000080">X1</text>
<text transform="translate(128 702.5) scale(0.9 1)" fill="#000080" stroke="#000080">S3</text>
<text transform="translate(151 703.5) scale(0.9 1)" fill="#000080" stroke="#000080">DOWN</text>
<text transform="translate(128 729.5) scale(0.9 1)" fill="#000080" stroke="#000080">S4</text>
<text transform="translate(156 730.5) scale(0.9 1)" fill="#000080" stroke="#000080">UP</text>
<text transform="translate(107.5 773.2) scale(0.9 1)" fill="#800000" stroke="#800000" text-anchor="middle">GND</text>
<text transform="translate(178 714) scale(0.9 1)" fill="#800000" stroke="#800000">DOWN</text>
<text transform="translate(178 741) scale(0.9 1)" fill="#800000" stroke="#800000">UP</text>
<text transform="translate(216 710) scale(0.9 1)" fill="#000080" stroke="#000080">R13</text>
<text transform="translate(216 729.5) scale(0.9 1)" fill="#000080" stroke="#000080">103</text>
<text transform="translate(216 737) scale(0.9 1)" fill="#000080" stroke="#000080">R14</text>
<text transform="translate(216 756.5) scale(0.9 1)" fill="#000080" stroke="#000080">103</text>
<text transform="translate(255.5 703) scale(0.9 1)" fill="#800000" stroke="#800000" text-anchor="middle">VCC</text>
<text transform="translate(658.5 777.04)" fill="#000080" stroke="#000080" text-anchor="middle" font-size="14" font-weight="bold" font-family='"Liberation Serif", "Noto Serif CJK SC", serif'>拟</text>
<text transform="translate(687 777.04)" fill="#000080" stroke="#000080" text-anchor="middle" font-size="14" font-weight="bold" font-family='"Liberation Serif", "Noto Serif CJK SC", serif'>制</text>
<text transform="translate(658.5 799.04)" fill="#000080" stroke="#000080" text-anchor="middle" font-size="14" font-weight="bold" font-family='"Liberation Serif", "Noto Serif CJK SC", serif'>校</text>
<text transform="translate(687 799.04)" fill="#000080" stroke="#000080" text-anchor="middle" font-size="14" font-weight="bold" font-family='"Liberation Serif", "Noto Serif CJK SC", serif'>对</text>
<text transform="translate(658.5 821.04)" fill="#000080" stroke="#000080" text-anchor="middle" font-size="14" font-weight="bold" font-family='"Liberation Serif", "Noto Serif CJK SC", serif'>审</text>
<text transform="translate(687 821.04)" fill="#000080" stroke="#000080" text-anchor="middle" font-size="14" font-weight="bold" font-family='"Liberation Serif", "Noto Serif CJK SC", serif'>核</text>
<text transform="translate(652 865.04)" fill="#000080" stroke="#000080" text-anchor="middle" font-size="14" font-weight="bold" font-family='"Liberation Serif", "Noto Serif CJK SC", serif'>标</text>
<text transform="translate(673 865.04)" fill="#000080" stroke="#000080" text-anchor="middle" font-size="14" font-weight="bold" font-family='"Liberation Serif", "Noto Serif CJK SC", serif'>准</text>
<text transform="translate(694.5 865.04)" fill="#000080" stroke="#000080" text-anchor="middle" font-size="14" font-weight="bold" font-family='"Liberation Serif", "Noto Serif CJK SC", serif'>化</text>
<text transform="translate(843 858.16)" fill="#000080" stroke="#000080" text-anchor="middle" font-size="18.5" font-weight="bold" font-family='"Liberation Serif", "Noto Serif CJK SC", serif'>电</text>
<text transform="translate(870 858.16)" fill="#000080" stroke="#000080" text-anchor="middle" font-size="18.5" font-weight="bold" font-family='"Liberation Serif", "Noto Serif CJK SC", serif'>原</text>
<text transform="translate(897.5 858.16)" fill="#000080" stroke="#000080" text-anchor="middle" font-size="18.5" font-weight="bold" font-family='"Liberation Serif", "Noto Serif CJK SC", serif'>理</text>
<text transform="translate(926 858.16)" fill="#000080" stroke="#000080" text-anchor="middle" font-size="18.5" font-weight="bold" font-family='"Liberation Serif", "Noto Serif CJK SC", serif'>图</text>
<text transform="translate(1005.5 849.54)" fill="#000080" stroke="#000080" text-anchor="middle" font-size="14" font-weight="bold" font-family='"Liberation Serif", "Noto Serif CJK SC", serif'>阶</text>
<text transform="translate(1054 849.54)" fill="#000080" stroke="#000080" text-anchor="middle" font-size="14" font-weight="bold" font-family='"Liberation Serif", "Noto Serif CJK SC", serif'>段</text>
<text transform="translate(1094 849.54)" fill="#000080" stroke="#000080" text-anchor="middle" font-size="14" font-weight="bold" font-family='"Liberation Serif", "Noto Serif CJK SC", serif'>第</text>
<text transform="translate(1142.5 849.54)" fill="#000080" stroke="#000080" text-anchor="middle" font-size="14" font-weight="bold" font-family='"Liberation Serif", "Noto Serif CJK SC", serif'>张</text>
<text transform="translate(1171 849.54)" fill="#000080" stroke="#000080" text-anchor="middle" font-size="14" font-weight="bold" font-family='"Liberation Serif", "Noto Serif CJK SC", serif'>共</text>
<text transform="translate(1224 849.54)" fill="#000080" stroke="#000080" text-anchor="middle" font-size="14" font-weight="bold" font-family='"Liberation Serif", "Noto Serif CJK SC", serif'>张</text>
</g>
<g>
<rect x="1282" y="0" width="16" height="873" fill="#efefef"/>
<rect x="1282.5" y="18.5" width="14" height="773" rx="1.5" fill="url(#vth)" stroke="#979797"/>
<path d="M1286 10.5l3.5 -4 3.5 4z" fill="#303030"/>
<path d="M1286.5 862.5h7l-3.5 4z" fill="#303030"/>
<path d="M1286 401.5h7" stroke="#404040" stroke-width="1"/>
<path d="M1286 402.5h7" stroke="#ffffff" stroke-width="1"/>
<path d="M1286 404.5h7" stroke="#404040" stroke-width="1"/>
<path d="M1286 405.5h7" stroke="#ffffff" stroke-width="1"/>
<path d="M1286 407.5h7" stroke="#404040" stroke-width="1"/>
<path d="M1286 408.5h7" stroke="#ffffff" stroke-width="1"/>
<rect x="0" y="873" width="1298" height="17" fill="#efefef"/>
<rect x="87.5" y="874.5" width="1149" height="14" rx="1.5" fill="url(#hth)" stroke="#979797"/>
<path d="M10 877.5v7l-4 -3.5z" fill="#303030"/>
<path d="M1271 877.5v7l4 -3.5z" fill="#303030"/>
<path d="M658.5 878v7" stroke="#404040" stroke-width="1"/>
<path d="M659.5 878v7" stroke="#ffffff" stroke-width="1"/>
<path d="M661.5 878v7" stroke="#404040" stroke-width="1"/>
<path d="M662.5 878v7" stroke="#ffffff" stroke-width="1"/>
<path d="M664.5 878v7" stroke="#404040" stroke-width="1"/>
<path d="M665.5 878v7" stroke="#ffffff" stroke-width="1"/>
<rect x="1282" y="873" width="16" height="17" fill="#f0f0f0"/>
</g>
</svg>
</body></html>
